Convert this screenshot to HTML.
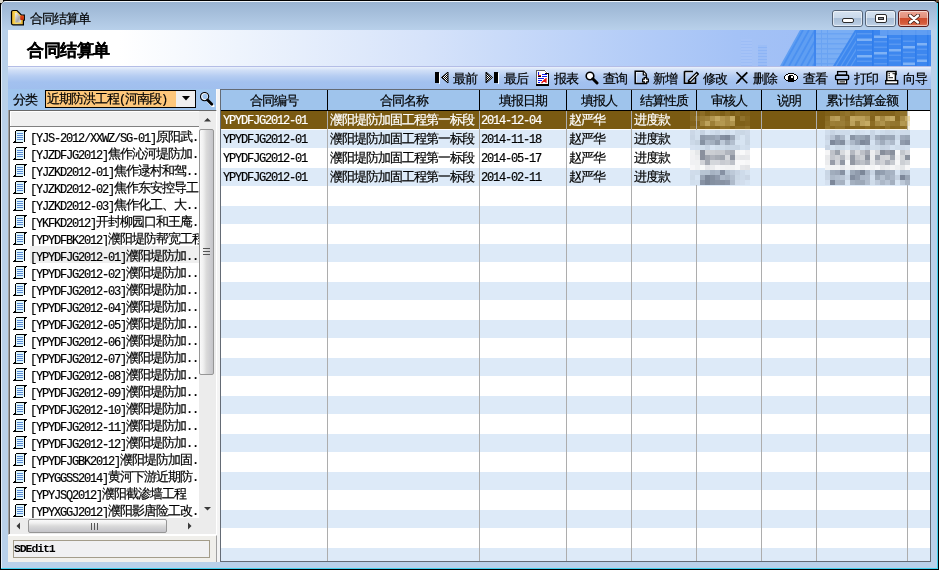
<!DOCTYPE html>
<html><head><meta charset="utf-8">
<style>
*{box-sizing:border-box;margin:0;padding:0}
html,body{width:939px;height:570px;overflow:hidden;background:#000}
body{position:relative;font-family:"Liberation Sans",sans-serif;font-size:12px;color:#000;line-height:12px}
.a{position:absolute}
.t{position:absolute;white-space:nowrap;line-height:12px;height:12px;font-size:13px;letter-spacing:-1px;-webkit-text-stroke:0.2px currentColor;will-change:transform}
.m{font-family:"Liberation Mono",monospace;font-size:12px;letter-spacing:-1.2px}
</style></head><body>

<div class="a" style="left:0;top:0;width:3px;height:2px;background:#d8d4c8"></div><div class="a" style="left:0;top:0;width:2px;height:3px;background:#d8d4c8"></div><div class="a" style="left:936px;top:0;width:3px;height:2px;background:#6a5038"></div>
<div class="a" style="left:1px;top:1px;width:937px;height:568px;background:#000;border-radius:6px 6px 0 0"></div><div class="a" style="left:937px;top:3px;width:1px;height:566px;background:#3fd0ee"></div><div class="a" style="left:1px;top:568px;width:937px;height:1px;background:#3fd0ee"></div>
<div class="a" style="left:1px;top:1px;width:936px;height:567px;background:#b9d1ea;border-radius:5px 4px 0 0;border-top:1px solid #eef4fa;border-left:1px solid #e3edf8"></div>
<div class="a" style="left:2px;top:2px;width:935px;height:28px;border-radius:4px 3px 0 0;background:linear-gradient(#9ab4d2,#b8d0ea)"></div>
<svg class="a" style="left:10px;top:9px" width="16" height="17" viewBox="0 0 16 17">
<defs><linearGradient id="gold" x1="0" x2="1"><stop offset="0" stop-color="#e8b020"/><stop offset="0.35" stop-color="#fbe070"/><stop offset="1" stop-color="#e0a828"/></linearGradient>
<linearGradient id="pap" x1="0" x2="1" y1="0" y2="1"><stop offset="0" stop-color="#f4f4f4"/><stop offset="0.6" stop-color="#a8a8a8"/><stop offset="1" stop-color="#e8e8e8"/></linearGradient>
<linearGradient id="red" x1="0" x2="0" y1="0" y2="1"><stop offset="0" stop-color="#f04818"/><stop offset="1" stop-color="#b82808"/></linearGradient></defs>
<path d="M1.5 3 Q1.5 1.5 3 1.5 H7 L11.5 6.2 H14.3 V11.2 H13.4 V15.8 H3 Q1.5 15.8 1.5 14.3 Z" fill="url(#gold)" stroke="#000" stroke-width="1.2"/>
<path d="M5.2 4 H6.8 L11 8.2 V13.6 H5.2 Z" fill="url(#pap)"/>
<rect x="10.2" y="6.6" width="3.6" height="4.4" rx="0.8" fill="url(#red)"/>
</svg>
<div class="t" style="left:30px;top:13px">合同结算单</div>
<div class="a" style="left:832px;top:10px;width:31px;height:17px;border:1px solid #56667a;border-radius:3px;background:linear-gradient(#d6e3f0 0%,#c9d9ea 45%,#a9bfd8 48%,#b4c8de 80%,#c4d6ea 100%)"><div class="a" style="left:0;top:0;right:0;bottom:0;border:1px solid rgba(255,255,255,0.55);border-radius:2px"></div><div class="a" style="left:9px;top:7px;width:12px;height:5px;background:#fff;border:1px solid #2a2a2a;border-radius:2px"></div></div>
<div class="a" style="left:865px;top:10px;width:31px;height:17px;border:1px solid #56667a;border-radius:3px;background:linear-gradient(#d6e3f0 0%,#c9d9ea 45%,#a9bfd8 48%,#b4c8de 80%,#c4d6ea 100%)"><div class="a" style="left:0;top:0;right:0;bottom:0;border:1px solid rgba(255,255,255,0.55);border-radius:2px"></div><div class="a" style="left:9px;top:3px;width:12px;height:9px;background:#fff;border:1px solid #2a2a2a;border-radius:2px"><div class="a" style="left:2px;top:2px;width:6px;height:3px;background:#8a9098;border:1px solid #2a2a2a"></div></div></div>
<div class="a" style="left:898px;top:10px;width:31px;height:17px;border:1px solid #5a1c1c;border-radius:3px;background:linear-gradient(#eda595 0%,#e2907c 45%,#cf4c2e 48%,#d45a3a 80%,#e07a5e 100%)"><div class="a" style="left:0;top:0;right:0;bottom:0;border:1px solid rgba(255,255,255,0.55);border-radius:2px"></div><svg class="a" style="left:9px;top:3px" width="12" height="10" viewBox="0 0 12 10"><path d="M2 1.5 L10 8.5 M10 1.5 L2 8.5" stroke="#3a1810" stroke-width="4" stroke-linecap="round"/><path d="M2 1.5 L10 8.5 M10 1.5 L2 8.5" stroke="#fff" stroke-width="2.4" stroke-linecap="round"/></svg></div>
<div class="a" style="left:8px;top:30px;width:923px;height:532px;background:#f0f0f0"></div>
<div class="a" style="left:8px;top:30px;width:923px;height:36px;background:linear-gradient(90deg,#ffffff 0%,#ffffff 12%,#eef4fd 25%,#d6e3fa 45%,#bcd2f8 62%,#a4c2f6 79%,#98b9f5 100%)"></div>
<svg class="a" style="left:730px;top:30px" width="201" height="36" viewBox="0 0 201 36"><rect x="11" y="9" width="11" height="27" fill="#a6c3f7"/><rect x="28" y="15" width="9" height="21" fill="#9bbdf6"/><rect x="11" y="11" width="11" height="1" fill="#9dbdf6"/><rect x="11" y="14" width="11" height="1" fill="#9dbdf6"/><rect x="11" y="17" width="11" height="1" fill="#9dbdf6"/><rect x="11" y="20" width="11" height="1" fill="#9dbdf6"/><rect x="11" y="23" width="11" height="1" fill="#9dbdf6"/><rect x="11" y="26" width="11" height="1" fill="#9dbdf6"/><rect x="11" y="29" width="11" height="1" fill="#9dbdf6"/><rect x="11" y="32" width="11" height="1" fill="#9dbdf6"/><rect x="11" y="35" width="11" height="1" fill="#9dbdf6"/><rect x="28" y="17" width="9" height="1" fill="#8db4f5"/><rect x="28" y="20" width="9" height="1" fill="#8db4f5"/><rect x="28" y="23" width="9" height="1" fill="#8db4f5"/><rect x="28" y="26" width="9" height="1" fill="#8db4f5"/><rect x="28" y="29" width="9" height="1" fill="#8db4f5"/><rect x="28" y="32" width="9" height="1" fill="#8db4f5"/><rect x="28" y="35" width="9" height="1" fill="#8db4f5"/><path d="M50 36 L70 0 L85 0 L85 36 Z" fill="#5f9ef2"/><path d="M53 36 L73 0" stroke="#4b90f0" stroke-width="1.8"/><path d="M59 36 L79 0" stroke="#4b90f0" stroke-width="1.8"/><path d="M65 36 L85 0" stroke="#4b90f0" stroke-width="1.8"/><path d="M71 36 L91 0" stroke="#4b90f0" stroke-width="1.8"/><path d="M77 36 L97 0" stroke="#4b90f0" stroke-width="1.8"/><path d="M83 36 L103 0" stroke="#4b90f0" stroke-width="1.8"/><rect x="84" y="0" width="2" height="36" fill="#3f86ee"/><rect x="86" y="0" width="40" height="36" fill="#7aaef4"/><rect x="86" y="3" width="40" height="1.5" fill="#6ba4f3"/><rect x="86" y="8" width="40" height="1.5" fill="#6ba4f3"/><rect x="86" y="13" width="40" height="1.5" fill="#6ba4f3"/><rect x="86" y="18" width="40" height="1.5" fill="#6ba4f3"/><rect x="86" y="23" width="40" height="1.5" fill="#6ba4f3"/><rect x="86" y="28" width="40" height="1.5" fill="#6ba4f3"/><rect x="86" y="33" width="40" height="1.5" fill="#6ba4f3"/><rect x="91" y="0" width="1" height="36" fill="#6aa3f2"/><rect x="97" y="0" width="1" height="36" fill="#6aa3f2"/><path d="M103 36 L125 0 L201 0 L201 36 Z" fill="#3e88ef"/><path d="M106 36 L128 0" stroke="#5c9cf2" stroke-width="1.2"/><path d="M111 36 L133 0" stroke="#5c9cf2" stroke-width="1.2"/><path d="M116 36 L138 0" stroke="#5c9cf2" stroke-width="1.2"/><path d="M121 36 L143 0" stroke="#5c9cf2" stroke-width="1.2"/><rect x="126" y="0" width="75" height="36" fill="#3d87ef"/><rect x="127" y="3.0" width="15" height="1.5" fill="#5898f1"/><rect x="127" y="8.5" width="15" height="2.5" fill="#7fb2f5"/><rect x="127" y="14.0" width="15" height="1.5" fill="#5898f1"/><rect x="127" y="19.5" width="15" height="1.5" fill="#5898f1"/><rect x="127" y="25.0" width="15" height="2.5" fill="#7fb2f5"/><rect x="127" y="30.5" width="15" height="1.5" fill="#5898f1"/><rect x="144" y="5.5" width="13" height="2.5" fill="#7fb2f5"/><rect x="144" y="11.0" width="13" height="1.5" fill="#5898f1"/><rect x="144" y="16.5" width="13" height="1.5" fill="#5898f1"/><rect x="144" y="22.0" width="13" height="2.5" fill="#7fb2f5"/><rect x="144" y="27.5" width="13" height="1.5" fill="#5898f1"/><rect x="144" y="33.0" width="13" height="1.5" fill="#5898f1"/><rect x="159" y="8.0" width="12" height="1.5" fill="#5898f1"/><rect x="159" y="13.5" width="12" height="1.5" fill="#5898f1"/><rect x="159" y="19.0" width="12" height="2.5" fill="#7fb2f5"/><rect x="159" y="24.5" width="12" height="1.5" fill="#5898f1"/><rect x="159" y="30.0" width="12" height="1.5" fill="#5898f1"/><rect x="173" y="10.5" width="12" height="1.5" fill="#5898f1"/><rect x="173" y="16.0" width="12" height="2.5" fill="#7fb2f5"/><rect x="173" y="21.5" width="12" height="1.5" fill="#5898f1"/><rect x="173" y="27.0" width="12" height="1.5" fill="#5898f1"/><rect x="173" y="32.5" width="12" height="2.5" fill="#7fb2f5"/><rect x="187" y="13.0" width="10" height="2.5" fill="#7fb2f5"/><rect x="187" y="18.5" width="10" height="1.5" fill="#5898f1"/><rect x="187" y="24.0" width="10" height="1.5" fill="#5898f1"/><rect x="187" y="29.5" width="10" height="2.5" fill="#7fb2f5"/><rect x="142" y="0" width="1.5" height="36" fill="#2f7dec"/><rect x="157" y="0" width="1.5" height="36" fill="#2f7dec"/><rect x="171" y="0" width="1.5" height="36" fill="#2f7dec"/><rect x="185" y="0" width="1.5" height="36" fill="#2f7dec"/><rect x="197" y="0" width="1.5" height="36" fill="#2f7dec"/><rect x="150" y="0" width="51" height="5" fill="#8dbaf6" opacity="0.45"/></svg>
<div class="t" style="left:27px;top:43px;font-size:17px;font-weight:bold;letter-spacing:-0.4px;line-height:16px;height:16px">合同结算单</div>
<div class="a" style="left:8px;top:66px;width:923px;height:1px;background:#b4bde6"></div>
<div class="a" style="left:8px;top:67px;width:923px;height:22px;background:linear-gradient(#eaf1fc 0,#d2e0f7 3px,#b6cdf2 9px,#a3c1ef 15px,#a0bfee 100%)"></div>
<svg class="a" style="left:435px;top:72px" width="15" height="12" viewBox="0 0 15 12"><defs><pattern id="chk" width="2" height="2" patternUnits="userSpaceOnUse"><rect width="2" height="2" fill="#fff"/><rect width="1" height="1" fill="#000"/><rect x="1" y="1" width="1" height="1" fill="#000"/></pattern></defs>
<rect x="0" y="0" width="4" height="11" fill="#000"/><rect x="4" y="1" width="1" height="11" fill="#fff"/>
<path d="M13 0 L13 11 L6.5 5.5 Z" fill="url(#chk)" stroke="#000" stroke-width="1"/></svg>
<div class="t" style="left:453px;top:73px">最前</div>
<svg class="a" style="left:485px;top:72px" width="15" height="12" viewBox="0 0 15 12">
<path d="M1 0 L1 11 L7.5 5.5 Z" fill="url(#chk)" stroke="#000" stroke-width="1"/>
<rect x="9" y="0" width="4" height="11" fill="#000"/><rect x="13" y="1" width="1" height="11" fill="#fff"/></svg>
<div class="t" style="left:504px;top:73px">最后</div>
<svg class="a" style="left:536px;top:70px" width="14" height="16" viewBox="0 0 14 16" shape-rendering="crispEdges">
<path d="M0 0 H9 L12 3 V15 H0 Z" fill="#fff"/>
<rect x="0" y="0" width="9" height="1" fill="#5a5a5a"/><rect x="0" y="0" width="1" height="15" fill="#5a5a5a"/>
<rect x="9" y="1" width="1" height="1" fill="#888"/><rect x="10" y="2" width="1" height="1" fill="#888"/>
<rect x="9" y="3" width="4" height="1" fill="#000"/><rect x="12" y="3" width="1" height="12" fill="#000"/><rect x="0" y="14" width="13" height="2" fill="#000"/>
<rect x="2" y="2" width="3" height="5" fill="#f4f4f4"/><rect x="2" y="2" width="1" height="3" fill="#1018e8"/><rect x="2" y="5" width="3" height="1" fill="#e81010"/><rect x="2" y="6" width="3" height="1" fill="#000"/>
<g fill="#1018e8"><rect x="6" y="4" width="5" height="1"/><rect x="6" y="6" width="5" height="1"/><rect x="2" y="8" width="6" height="1"/><rect x="2" y="10" width="4" height="1"/><rect x="2" y="12" width="2" height="1"/></g>
<path d="M5.5 13 L10 8.5 M10 8 V13 M7.5 11.5 H10" stroke="#e81010" stroke-width="1.2" fill="none" shape-rendering="auto"/>
</svg>
<div class="t" style="left:554px;top:73px">报表</div>
<svg class="a" style="left:585px;top:71px" width="14" height="14" viewBox="0 0 14 14">
<circle cx="5" cy="5" r="3.8" fill="#fff" stroke="#000" stroke-width="1.6"/>
<path d="M7.8 7.8 L12 12" stroke="#000" stroke-width="3" stroke-linecap="round"/></svg>
<div class="t" style="left:603px;top:73px">查询</div>
<svg class="a" style="left:634px;top:70px" width="16" height="15" viewBox="0 0 16 15">
<path d="M2 2 H9 L12 5 V13 H2 Z" fill="none" stroke="#fff" stroke-width="1"/>
<path d="M1.2 1.3 H9.5 L12.3 4.3 V13.5 H1.2 Z" fill="none" stroke="#000" stroke-width="1.5"/>
<path d="M9.3 1.5 V5 H12.5" fill="#fff" stroke="#000" stroke-width="1.2"/>
<path d="M11.5 7 V14 M8 10.5 H15" stroke="#000" stroke-width="3.8"/><path d="M11.5 8.2 V12.8 M9.2 10.5 H13.8" stroke="#fff" stroke-width="1.3"/>
</svg>
<div class="t" style="left:653px;top:73px">新增</div>
<svg class="a" style="left:683px;top:70px" width="17" height="15" viewBox="0 0 17 15">
<path d="M2.3 2.3 H9 M2.3 2.3 V12.5 H11.8 V8" fill="none" stroke="#fff" stroke-width="1"/>
<path d="M1.5 1.5 H10 M1.5 1.3 V13.3 H12.5 V7.5" fill="none" stroke="#000" stroke-width="1.6"/>
<path d="M5.5 10.5 L13.5 2.5 L15.2 4.2 L7.2 12.2 Z" fill="#fff" stroke="#000" stroke-width="1.2"/>
<path d="M4.5 13.2 L5.2 10.2 L7.5 12.5 Z" fill="#000"/>
<path d="M13.8 1.5 L16 3.8 L15 4.8 L12.8 2.6 Z" fill="#000"/>
</svg>
<div class="t" style="left:703px;top:73px">修改</div>
<svg class="a" style="left:735px;top:71px" width="14" height="14" viewBox="0 0 14 14">
<path d="M1.5 1.3 L12.3 12.3" stroke="#000" stroke-width="1.5"/>
<path d="M12.3 1.3 L3 10.5" stroke="#000" stroke-width="1.8"/>
<path d="M0.8 12.2 L3.2 9.2 L4.8 10.8 L1.8 13 Z" fill="#000"/>
<path d="M2 13.3 L5 11.5 M12.8 12.8" stroke="#fff" stroke-width="0.8" opacity="0.8"/>
</svg>
<div class="t" style="left:753px;top:73px">删除</div>
<svg class="a" style="left:784px;top:72px" width="14" height="11" viewBox="0 0 14 11" shape-rendering="crispEdges"><rect x="4" y="2" width="6" height="1" fill="#fff"/><rect x="2" y="3" width="10" height="1" fill="#fff"/><rect x="1" y="4" width="12" height="3" fill="#fff"/><rect x="2" y="7" width="10" height="1" fill="#fff"/><rect x="4" y="8" width="6" height="1" fill="#fff"/><rect x="4" y="1" width="6" height="1" fill="#000"/><rect x="2" y="2" width="2" height="1" fill="#000"/><rect x="10" y="2" width="2" height="1" fill="#000"/><rect x="1" y="3" width="1" height="1" fill="#000"/><rect x="12" y="3" width="1" height="1" fill="#000"/><rect x="0" y="4" width="1" height="3" fill="#000"/><rect x="13" y="4" width="1" height="3" fill="#000"/><rect x="1" y="7" width="1" height="1" fill="#000"/><rect x="12" y="7" width="1" height="1" fill="#000"/><rect x="2" y="8" width="2" height="1" fill="#000"/><rect x="10" y="8" width="2" height="1" fill="#000"/><rect x="4" y="9" width="6" height="1" fill="#000"/><rect x="5" y="3" width="4" height="1" fill="#000"/><rect x="4" y="4" width="6" height="5" fill="#000"/><rect x="5" y="9" width="4" height="1" fill="#000"/><rect x="7" y="4" width="2" height="2" fill="#fff"/></svg>
<div class="t" style="left:803px;top:73px">查看</div>
<svg class="a" style="left:834px;top:70px" width="16" height="15" viewBox="0 0 16 15">
<rect x="3.6" y="1.6" width="9" height="3.6" fill="none" stroke="#fff" stroke-width="0.8"/>
<rect x="3.6" y="10.4" width="9" height="3.4" fill="#fff"/>
<rect x="1.6" y="5.5" width="13" height="4" fill="none" stroke="#fff" stroke-width="0.8"/>
<rect x="3.6" y="1.6" width="9" height="3.6" fill="none" stroke="#000" stroke-width="1.3"/>
<rect x="1.6" y="5.2" width="13" height="4.4" rx="0.8" fill="none" stroke="#000" stroke-width="1.4"/>
<rect x="3.6" y="9.6" width="9" height="4.2" fill="none" stroke="#000" stroke-width="1.3"/>
<path d="M5.5 11.9 H11" stroke="#000" stroke-width="1"/>
</svg>
<div class="t" style="left:854px;top:73px">打印</div>
<svg class="a" style="left:884px;top:70px" width="15" height="15" viewBox="0 0 15 15">
<rect x="3" y="2" width="8" height="8" fill="#fff"/>
<path d="M2.8 1.6 H12 V4.6 H11.4 V10 M2.8 1.2 V10" fill="none" stroke="#000" stroke-width="1.5"/>
<path d="M4.5 3.7 H6 M8.5 3.7 H12.5 M4.5 5.7 H6 M4.5 7.7 H9" stroke="#000" stroke-width="0.9"/>
<rect x="1.7" y="10.6" width="12" height="3.3" fill="#fff" stroke="#000" stroke-width="1.3"/>
</svg>
<div class="t" style="left:903px;top:73px">向导</div>
<div class="a" style="left:8px;top:89px;width:208px;height:21px;background:#a0c5ee"></div>
<div class="t" style="left:13px;top:94px">分类</div>
<div class="a" style="left:45px;top:90px;width:151px;height:18px;border:1px solid #000;background:#fdc77b"></div>
<div class="t" style="left:47px;top:93px">近期防洪工程<span class="m">(</span>河南段<span class="m">)</span></div>
<div class="a" style="left:176px;top:91px;width:19px;height:16px;background:#efefef"></div>
<svg class="a" style="left:182px;top:96px" width="9" height="5" viewBox="0 0 9 5"><path d="M0 0 H8 L4 4.5 Z" fill="#000"/></svg>
<svg class="a" style="left:200px;top:92px" width="15" height="15" viewBox="0 0 15 15">
<path d="M8.5 9.5 L13 14" stroke="#fff" stroke-width="3" stroke-linecap="round"/>
<circle cx="5" cy="4.5" r="3.3" fill="none" stroke="#fff" stroke-width="1.2"/>
<circle cx="4.6" cy="4.6" r="4.1" fill="none" stroke="#000" stroke-width="1.1"/>
<path d="M7.6 8 L11.8 12.2" stroke="#000" stroke-width="2.8" stroke-linecap="round"/></svg>
<div class="a" style="left:216px;top:89px;width:4px;height:473px;background:#f4f4f4;border-left:1px solid #fafafa"></div>
<div class="a" style="left:8px;top:110px;width:209px;height:425px;border-top:1px solid #a0a0a0;border-left:1px solid #a0a0a0;border-right:1px solid #fff;border-bottom:1px solid #fff"></div>
<div class="a" style="left:9px;top:110px;width:207px;height:424px;background:#fff;border-top:1px solid #696969;border-left:1px solid #696969"></div>
<div class="a" style="left:10px;top:111px;width:189px;height:15px;background:#f0f0f0;border-top:1px solid #fff;border-left:1px solid #fff"></div>
<div class="a" style="left:10px;top:126px;width:189px;height:1px;background:#808080"></div>
<svg class="a" style="left:13px;top:130px" width="14" height="13" viewBox="0 0 14 13" shape-rendering="crispEdges">
<rect x="3" y="1" width="8" height="11" fill="#def6fd"/>
<rect x="3" y="0" width="11" height="1" fill="#000"/><rect x="11" y="1" width="1" height="11" fill="#000"/><rect x="12" y="1" width="1" height="1" fill="#000"/>
<rect x="2" y="1" width="1" height="11" fill="#000"/><rect x="0" y="12" width="10" height="1" fill="#000"/><rect x="1" y="11" width="1" height="1" fill="#000"/>
<rect x="4" y="3" width="6" height="1" fill="#5a8ad6"/><rect x="4" y="5" width="6" height="1" fill="#5a8ad6"/><rect x="4" y="7" width="6" height="1" fill="#5a8ad6"/><rect x="4" y="9" width="6" height="1" fill="#5a8ad6"/>
</svg>
<div class="t" style="left:30px;top:131px"><span class="m" style="position:relative;top:1px">[YJS-2012/XXWZ/SG-01]</span>原阳武<span class="m">.</span></div>
<svg class="a" style="left:13px;top:147px" width="14" height="13" viewBox="0 0 14 13" shape-rendering="crispEdges">
<rect x="3" y="1" width="8" height="11" fill="#def6fd"/>
<rect x="3" y="0" width="11" height="1" fill="#000"/><rect x="11" y="1" width="1" height="11" fill="#000"/><rect x="12" y="1" width="1" height="1" fill="#000"/>
<rect x="2" y="1" width="1" height="11" fill="#000"/><rect x="0" y="12" width="10" height="1" fill="#000"/><rect x="1" y="11" width="1" height="1" fill="#000"/>
<rect x="4" y="3" width="6" height="1" fill="#5a8ad6"/><rect x="4" y="5" width="6" height="1" fill="#5a8ad6"/><rect x="4" y="7" width="6" height="1" fill="#5a8ad6"/><rect x="4" y="9" width="6" height="1" fill="#5a8ad6"/>
</svg>
<div class="t" style="left:30px;top:148px"><span class="m" style="position:relative;top:1px">[YJZDFJG2012]</span>焦作沁河堤防加<span class="m">.</span></div>
<svg class="a" style="left:13px;top:164px" width="14" height="13" viewBox="0 0 14 13" shape-rendering="crispEdges">
<rect x="3" y="1" width="8" height="11" fill="#def6fd"/>
<rect x="3" y="0" width="11" height="1" fill="#000"/><rect x="11" y="1" width="1" height="11" fill="#000"/><rect x="12" y="1" width="1" height="1" fill="#000"/>
<rect x="2" y="1" width="1" height="11" fill="#000"/><rect x="0" y="12" width="10" height="1" fill="#000"/><rect x="1" y="11" width="1" height="1" fill="#000"/>
<rect x="4" y="3" width="6" height="1" fill="#5a8ad6"/><rect x="4" y="5" width="6" height="1" fill="#5a8ad6"/><rect x="4" y="7" width="6" height="1" fill="#5a8ad6"/><rect x="4" y="9" width="6" height="1" fill="#5a8ad6"/>
</svg>
<div class="t" style="left:30px;top:165px"><span class="m" style="position:relative;top:1px">[YJZKD2012-01]</span>焦作逯村和驾<span class="m">..</span></div>
<svg class="a" style="left:13px;top:181px" width="14" height="13" viewBox="0 0 14 13" shape-rendering="crispEdges">
<rect x="3" y="1" width="8" height="11" fill="#def6fd"/>
<rect x="3" y="0" width="11" height="1" fill="#000"/><rect x="11" y="1" width="1" height="11" fill="#000"/><rect x="12" y="1" width="1" height="1" fill="#000"/>
<rect x="2" y="1" width="1" height="11" fill="#000"/><rect x="0" y="12" width="10" height="1" fill="#000"/><rect x="1" y="11" width="1" height="1" fill="#000"/>
<rect x="4" y="3" width="6" height="1" fill="#5a8ad6"/><rect x="4" y="5" width="6" height="1" fill="#5a8ad6"/><rect x="4" y="7" width="6" height="1" fill="#5a8ad6"/><rect x="4" y="9" width="6" height="1" fill="#5a8ad6"/>
</svg>
<div class="t" style="left:30px;top:182px"><span class="m" style="position:relative;top:1px">[YJZKD2012-02]</span>焦作东安控导工<span class="m"></span></div>
<svg class="a" style="left:13px;top:198px" width="14" height="13" viewBox="0 0 14 13" shape-rendering="crispEdges">
<rect x="3" y="1" width="8" height="11" fill="#def6fd"/>
<rect x="3" y="0" width="11" height="1" fill="#000"/><rect x="11" y="1" width="1" height="11" fill="#000"/><rect x="12" y="1" width="1" height="1" fill="#000"/>
<rect x="2" y="1" width="1" height="11" fill="#000"/><rect x="0" y="12" width="10" height="1" fill="#000"/><rect x="1" y="11" width="1" height="1" fill="#000"/>
<rect x="4" y="3" width="6" height="1" fill="#5a8ad6"/><rect x="4" y="5" width="6" height="1" fill="#5a8ad6"/><rect x="4" y="7" width="6" height="1" fill="#5a8ad6"/><rect x="4" y="9" width="6" height="1" fill="#5a8ad6"/>
</svg>
<div class="t" style="left:30px;top:199px"><span class="m" style="position:relative;top:1px">[YJZKD2012-03]</span>焦作化工、大<span class="m">..</span></div>
<svg class="a" style="left:13px;top:215px" width="14" height="13" viewBox="0 0 14 13" shape-rendering="crispEdges">
<rect x="3" y="1" width="8" height="11" fill="#def6fd"/>
<rect x="3" y="0" width="11" height="1" fill="#000"/><rect x="11" y="1" width="1" height="11" fill="#000"/><rect x="12" y="1" width="1" height="1" fill="#000"/>
<rect x="2" y="1" width="1" height="11" fill="#000"/><rect x="0" y="12" width="10" height="1" fill="#000"/><rect x="1" y="11" width="1" height="1" fill="#000"/>
<rect x="4" y="3" width="6" height="1" fill="#5a8ad6"/><rect x="4" y="5" width="6" height="1" fill="#5a8ad6"/><rect x="4" y="7" width="6" height="1" fill="#5a8ad6"/><rect x="4" y="9" width="6" height="1" fill="#5a8ad6"/>
</svg>
<div class="t" style="left:30px;top:216px"><span class="m" style="position:relative;top:1px">[YKFKD2012]</span>开封柳园口和王庵<span class="m">.</span></div>
<svg class="a" style="left:13px;top:232px" width="14" height="13" viewBox="0 0 14 13" shape-rendering="crispEdges">
<rect x="3" y="1" width="8" height="11" fill="#def6fd"/>
<rect x="3" y="0" width="11" height="1" fill="#000"/><rect x="11" y="1" width="1" height="11" fill="#000"/><rect x="12" y="1" width="1" height="1" fill="#000"/>
<rect x="2" y="1" width="1" height="11" fill="#000"/><rect x="0" y="12" width="10" height="1" fill="#000"/><rect x="1" y="11" width="1" height="1" fill="#000"/>
<rect x="4" y="3" width="6" height="1" fill="#5a8ad6"/><rect x="4" y="5" width="6" height="1" fill="#5a8ad6"/><rect x="4" y="7" width="6" height="1" fill="#5a8ad6"/><rect x="4" y="9" width="6" height="1" fill="#5a8ad6"/>
</svg>
<div class="t" style="left:30px;top:233px"><span class="m" style="position:relative;top:1px">[YPYDFBK2012]</span>濮阳堤防帮宽工程<span class="m"></span></div>
<div class="a" style="left:30px;top:246px;width:169px;height:17px;background:#efefef"></div>
<svg class="a" style="left:13px;top:249px" width="14" height="13" viewBox="0 0 14 13" shape-rendering="crispEdges">
<rect x="3" y="1" width="8" height="11" fill="#def6fd"/>
<rect x="3" y="0" width="11" height="1" fill="#000"/><rect x="11" y="1" width="1" height="11" fill="#000"/><rect x="12" y="1" width="1" height="1" fill="#000"/>
<rect x="2" y="1" width="1" height="11" fill="#000"/><rect x="0" y="12" width="10" height="1" fill="#000"/><rect x="1" y="11" width="1" height="1" fill="#000"/>
<rect x="4" y="3" width="6" height="1" fill="#5a8ad6"/><rect x="4" y="5" width="6" height="1" fill="#5a8ad6"/><rect x="4" y="7" width="6" height="1" fill="#5a8ad6"/><rect x="4" y="9" width="6" height="1" fill="#5a8ad6"/>
</svg>
<div class="t" style="left:30px;top:250px"><span class="m" style="position:relative;top:1px">[YPYDFJG2012-01]</span>濮阳堤防加<span class="m">..</span></div>
<svg class="a" style="left:13px;top:266px" width="14" height="13" viewBox="0 0 14 13" shape-rendering="crispEdges">
<rect x="3" y="1" width="8" height="11" fill="#def6fd"/>
<rect x="3" y="0" width="11" height="1" fill="#000"/><rect x="11" y="1" width="1" height="11" fill="#000"/><rect x="12" y="1" width="1" height="1" fill="#000"/>
<rect x="2" y="1" width="1" height="11" fill="#000"/><rect x="0" y="12" width="10" height="1" fill="#000"/><rect x="1" y="11" width="1" height="1" fill="#000"/>
<rect x="4" y="3" width="6" height="1" fill="#5a8ad6"/><rect x="4" y="5" width="6" height="1" fill="#5a8ad6"/><rect x="4" y="7" width="6" height="1" fill="#5a8ad6"/><rect x="4" y="9" width="6" height="1" fill="#5a8ad6"/>
</svg>
<div class="t" style="left:30px;top:267px"><span class="m" style="position:relative;top:1px">[YPYDFJG2012-02]</span>濮阳堤防加<span class="m">..</span></div>
<svg class="a" style="left:13px;top:283px" width="14" height="13" viewBox="0 0 14 13" shape-rendering="crispEdges">
<rect x="3" y="1" width="8" height="11" fill="#def6fd"/>
<rect x="3" y="0" width="11" height="1" fill="#000"/><rect x="11" y="1" width="1" height="11" fill="#000"/><rect x="12" y="1" width="1" height="1" fill="#000"/>
<rect x="2" y="1" width="1" height="11" fill="#000"/><rect x="0" y="12" width="10" height="1" fill="#000"/><rect x="1" y="11" width="1" height="1" fill="#000"/>
<rect x="4" y="3" width="6" height="1" fill="#5a8ad6"/><rect x="4" y="5" width="6" height="1" fill="#5a8ad6"/><rect x="4" y="7" width="6" height="1" fill="#5a8ad6"/><rect x="4" y="9" width="6" height="1" fill="#5a8ad6"/>
</svg>
<div class="t" style="left:30px;top:284px"><span class="m" style="position:relative;top:1px">[YPYDFJG2012-03]</span>濮阳堤防加<span class="m">..</span></div>
<svg class="a" style="left:13px;top:300px" width="14" height="13" viewBox="0 0 14 13" shape-rendering="crispEdges">
<rect x="3" y="1" width="8" height="11" fill="#def6fd"/>
<rect x="3" y="0" width="11" height="1" fill="#000"/><rect x="11" y="1" width="1" height="11" fill="#000"/><rect x="12" y="1" width="1" height="1" fill="#000"/>
<rect x="2" y="1" width="1" height="11" fill="#000"/><rect x="0" y="12" width="10" height="1" fill="#000"/><rect x="1" y="11" width="1" height="1" fill="#000"/>
<rect x="4" y="3" width="6" height="1" fill="#5a8ad6"/><rect x="4" y="5" width="6" height="1" fill="#5a8ad6"/><rect x="4" y="7" width="6" height="1" fill="#5a8ad6"/><rect x="4" y="9" width="6" height="1" fill="#5a8ad6"/>
</svg>
<div class="t" style="left:30px;top:301px"><span class="m" style="position:relative;top:1px">[YPYDFJG2012-04]</span>濮阳堤防加<span class="m">..</span></div>
<svg class="a" style="left:13px;top:317px" width="14" height="13" viewBox="0 0 14 13" shape-rendering="crispEdges">
<rect x="3" y="1" width="8" height="11" fill="#def6fd"/>
<rect x="3" y="0" width="11" height="1" fill="#000"/><rect x="11" y="1" width="1" height="11" fill="#000"/><rect x="12" y="1" width="1" height="1" fill="#000"/>
<rect x="2" y="1" width="1" height="11" fill="#000"/><rect x="0" y="12" width="10" height="1" fill="#000"/><rect x="1" y="11" width="1" height="1" fill="#000"/>
<rect x="4" y="3" width="6" height="1" fill="#5a8ad6"/><rect x="4" y="5" width="6" height="1" fill="#5a8ad6"/><rect x="4" y="7" width="6" height="1" fill="#5a8ad6"/><rect x="4" y="9" width="6" height="1" fill="#5a8ad6"/>
</svg>
<div class="t" style="left:30px;top:318px"><span class="m" style="position:relative;top:1px">[YPYDFJG2012-05]</span>濮阳堤防加<span class="m">..</span></div>
<svg class="a" style="left:13px;top:334px" width="14" height="13" viewBox="0 0 14 13" shape-rendering="crispEdges">
<rect x="3" y="1" width="8" height="11" fill="#def6fd"/>
<rect x="3" y="0" width="11" height="1" fill="#000"/><rect x="11" y="1" width="1" height="11" fill="#000"/><rect x="12" y="1" width="1" height="1" fill="#000"/>
<rect x="2" y="1" width="1" height="11" fill="#000"/><rect x="0" y="12" width="10" height="1" fill="#000"/><rect x="1" y="11" width="1" height="1" fill="#000"/>
<rect x="4" y="3" width="6" height="1" fill="#5a8ad6"/><rect x="4" y="5" width="6" height="1" fill="#5a8ad6"/><rect x="4" y="7" width="6" height="1" fill="#5a8ad6"/><rect x="4" y="9" width="6" height="1" fill="#5a8ad6"/>
</svg>
<div class="t" style="left:30px;top:335px"><span class="m" style="position:relative;top:1px">[YPYDFJG2012-06]</span>濮阳堤防加<span class="m">..</span></div>
<svg class="a" style="left:13px;top:351px" width="14" height="13" viewBox="0 0 14 13" shape-rendering="crispEdges">
<rect x="3" y="1" width="8" height="11" fill="#def6fd"/>
<rect x="3" y="0" width="11" height="1" fill="#000"/><rect x="11" y="1" width="1" height="11" fill="#000"/><rect x="12" y="1" width="1" height="1" fill="#000"/>
<rect x="2" y="1" width="1" height="11" fill="#000"/><rect x="0" y="12" width="10" height="1" fill="#000"/><rect x="1" y="11" width="1" height="1" fill="#000"/>
<rect x="4" y="3" width="6" height="1" fill="#5a8ad6"/><rect x="4" y="5" width="6" height="1" fill="#5a8ad6"/><rect x="4" y="7" width="6" height="1" fill="#5a8ad6"/><rect x="4" y="9" width="6" height="1" fill="#5a8ad6"/>
</svg>
<div class="t" style="left:30px;top:352px"><span class="m" style="position:relative;top:1px">[YPYDFJG2012-07]</span>濮阳堤防加<span class="m">..</span></div>
<svg class="a" style="left:13px;top:368px" width="14" height="13" viewBox="0 0 14 13" shape-rendering="crispEdges">
<rect x="3" y="1" width="8" height="11" fill="#def6fd"/>
<rect x="3" y="0" width="11" height="1" fill="#000"/><rect x="11" y="1" width="1" height="11" fill="#000"/><rect x="12" y="1" width="1" height="1" fill="#000"/>
<rect x="2" y="1" width="1" height="11" fill="#000"/><rect x="0" y="12" width="10" height="1" fill="#000"/><rect x="1" y="11" width="1" height="1" fill="#000"/>
<rect x="4" y="3" width="6" height="1" fill="#5a8ad6"/><rect x="4" y="5" width="6" height="1" fill="#5a8ad6"/><rect x="4" y="7" width="6" height="1" fill="#5a8ad6"/><rect x="4" y="9" width="6" height="1" fill="#5a8ad6"/>
</svg>
<div class="t" style="left:30px;top:369px"><span class="m" style="position:relative;top:1px">[YPYDFJG2012-08]</span>濮阳堤防加<span class="m">..</span></div>
<svg class="a" style="left:13px;top:385px" width="14" height="13" viewBox="0 0 14 13" shape-rendering="crispEdges">
<rect x="3" y="1" width="8" height="11" fill="#def6fd"/>
<rect x="3" y="0" width="11" height="1" fill="#000"/><rect x="11" y="1" width="1" height="11" fill="#000"/><rect x="12" y="1" width="1" height="1" fill="#000"/>
<rect x="2" y="1" width="1" height="11" fill="#000"/><rect x="0" y="12" width="10" height="1" fill="#000"/><rect x="1" y="11" width="1" height="1" fill="#000"/>
<rect x="4" y="3" width="6" height="1" fill="#5a8ad6"/><rect x="4" y="5" width="6" height="1" fill="#5a8ad6"/><rect x="4" y="7" width="6" height="1" fill="#5a8ad6"/><rect x="4" y="9" width="6" height="1" fill="#5a8ad6"/>
</svg>
<div class="t" style="left:30px;top:386px"><span class="m" style="position:relative;top:1px">[YPYDFJG2012-09]</span>濮阳堤防加<span class="m">..</span></div>
<svg class="a" style="left:13px;top:402px" width="14" height="13" viewBox="0 0 14 13" shape-rendering="crispEdges">
<rect x="3" y="1" width="8" height="11" fill="#def6fd"/>
<rect x="3" y="0" width="11" height="1" fill="#000"/><rect x="11" y="1" width="1" height="11" fill="#000"/><rect x="12" y="1" width="1" height="1" fill="#000"/>
<rect x="2" y="1" width="1" height="11" fill="#000"/><rect x="0" y="12" width="10" height="1" fill="#000"/><rect x="1" y="11" width="1" height="1" fill="#000"/>
<rect x="4" y="3" width="6" height="1" fill="#5a8ad6"/><rect x="4" y="5" width="6" height="1" fill="#5a8ad6"/><rect x="4" y="7" width="6" height="1" fill="#5a8ad6"/><rect x="4" y="9" width="6" height="1" fill="#5a8ad6"/>
</svg>
<div class="t" style="left:30px;top:403px"><span class="m" style="position:relative;top:1px">[YPYDFJG2012-10]</span>濮阳堤防加<span class="m">..</span></div>
<svg class="a" style="left:13px;top:419px" width="14" height="13" viewBox="0 0 14 13" shape-rendering="crispEdges">
<rect x="3" y="1" width="8" height="11" fill="#def6fd"/>
<rect x="3" y="0" width="11" height="1" fill="#000"/><rect x="11" y="1" width="1" height="11" fill="#000"/><rect x="12" y="1" width="1" height="1" fill="#000"/>
<rect x="2" y="1" width="1" height="11" fill="#000"/><rect x="0" y="12" width="10" height="1" fill="#000"/><rect x="1" y="11" width="1" height="1" fill="#000"/>
<rect x="4" y="3" width="6" height="1" fill="#5a8ad6"/><rect x="4" y="5" width="6" height="1" fill="#5a8ad6"/><rect x="4" y="7" width="6" height="1" fill="#5a8ad6"/><rect x="4" y="9" width="6" height="1" fill="#5a8ad6"/>
</svg>
<div class="t" style="left:30px;top:420px"><span class="m" style="position:relative;top:1px">[YPYDFJG2012-11]</span>濮阳堤防加<span class="m">..</span></div>
<svg class="a" style="left:13px;top:436px" width="14" height="13" viewBox="0 0 14 13" shape-rendering="crispEdges">
<rect x="3" y="1" width="8" height="11" fill="#def6fd"/>
<rect x="3" y="0" width="11" height="1" fill="#000"/><rect x="11" y="1" width="1" height="11" fill="#000"/><rect x="12" y="1" width="1" height="1" fill="#000"/>
<rect x="2" y="1" width="1" height="11" fill="#000"/><rect x="0" y="12" width="10" height="1" fill="#000"/><rect x="1" y="11" width="1" height="1" fill="#000"/>
<rect x="4" y="3" width="6" height="1" fill="#5a8ad6"/><rect x="4" y="5" width="6" height="1" fill="#5a8ad6"/><rect x="4" y="7" width="6" height="1" fill="#5a8ad6"/><rect x="4" y="9" width="6" height="1" fill="#5a8ad6"/>
</svg>
<div class="t" style="left:30px;top:437px"><span class="m" style="position:relative;top:1px">[YPYDFJG2012-12]</span>濮阳堤防加<span class="m">..</span></div>
<svg class="a" style="left:13px;top:453px" width="14" height="13" viewBox="0 0 14 13" shape-rendering="crispEdges">
<rect x="3" y="1" width="8" height="11" fill="#def6fd"/>
<rect x="3" y="0" width="11" height="1" fill="#000"/><rect x="11" y="1" width="1" height="11" fill="#000"/><rect x="12" y="1" width="1" height="1" fill="#000"/>
<rect x="2" y="1" width="1" height="11" fill="#000"/><rect x="0" y="12" width="10" height="1" fill="#000"/><rect x="1" y="11" width="1" height="1" fill="#000"/>
<rect x="4" y="3" width="6" height="1" fill="#5a8ad6"/><rect x="4" y="5" width="6" height="1" fill="#5a8ad6"/><rect x="4" y="7" width="6" height="1" fill="#5a8ad6"/><rect x="4" y="9" width="6" height="1" fill="#5a8ad6"/>
</svg>
<div class="t" style="left:30px;top:454px"><span class="m" style="position:relative;top:1px">[YPYDFJGBK2012]</span>濮阳堤防加固<span class="m">.</span></div>
<svg class="a" style="left:13px;top:470px" width="14" height="13" viewBox="0 0 14 13" shape-rendering="crispEdges">
<rect x="3" y="1" width="8" height="11" fill="#def6fd"/>
<rect x="3" y="0" width="11" height="1" fill="#000"/><rect x="11" y="1" width="1" height="11" fill="#000"/><rect x="12" y="1" width="1" height="1" fill="#000"/>
<rect x="2" y="1" width="1" height="11" fill="#000"/><rect x="0" y="12" width="10" height="1" fill="#000"/><rect x="1" y="11" width="1" height="1" fill="#000"/>
<rect x="4" y="3" width="6" height="1" fill="#5a8ad6"/><rect x="4" y="5" width="6" height="1" fill="#5a8ad6"/><rect x="4" y="7" width="6" height="1" fill="#5a8ad6"/><rect x="4" y="9" width="6" height="1" fill="#5a8ad6"/>
</svg>
<div class="t" style="left:30px;top:471px"><span class="m" style="position:relative;top:1px">[YPYGGSS2014]</span>黄河下游近期防<span class="m">.</span></div>
<svg class="a" style="left:13px;top:487px" width="14" height="13" viewBox="0 0 14 13" shape-rendering="crispEdges">
<rect x="3" y="1" width="8" height="11" fill="#def6fd"/>
<rect x="3" y="0" width="11" height="1" fill="#000"/><rect x="11" y="1" width="1" height="11" fill="#000"/><rect x="12" y="1" width="1" height="1" fill="#000"/>
<rect x="2" y="1" width="1" height="11" fill="#000"/><rect x="0" y="12" width="10" height="1" fill="#000"/><rect x="1" y="11" width="1" height="1" fill="#000"/>
<rect x="4" y="3" width="6" height="1" fill="#5a8ad6"/><rect x="4" y="5" width="6" height="1" fill="#5a8ad6"/><rect x="4" y="7" width="6" height="1" fill="#5a8ad6"/><rect x="4" y="9" width="6" height="1" fill="#5a8ad6"/>
</svg>
<div class="t" style="left:30px;top:488px"><span class="m" style="position:relative;top:1px">[YPYJSQ2012]</span>濮阳截渗墙工程<span class="m"></span></div>
<svg class="a" style="left:13px;top:504px" width="14" height="13" viewBox="0 0 14 13" shape-rendering="crispEdges">
<rect x="3" y="1" width="8" height="11" fill="#def6fd"/>
<rect x="3" y="0" width="11" height="1" fill="#000"/><rect x="11" y="1" width="1" height="11" fill="#000"/><rect x="12" y="1" width="1" height="1" fill="#000"/>
<rect x="2" y="1" width="1" height="11" fill="#000"/><rect x="0" y="12" width="10" height="1" fill="#000"/><rect x="1" y="11" width="1" height="1" fill="#000"/>
<rect x="4" y="3" width="6" height="1" fill="#5a8ad6"/><rect x="4" y="5" width="6" height="1" fill="#5a8ad6"/><rect x="4" y="7" width="6" height="1" fill="#5a8ad6"/><rect x="4" y="9" width="6" height="1" fill="#5a8ad6"/>
</svg>
<div class="t" style="left:30px;top:505px"><span class="m" style="position:relative;top:1px">[YPYXGGJ2012]</span>濮阳影唐险工改<span class="m">.</span></div>
<div class="a" style="left:199px;top:111px;width:17px;height:407px;background:#ececec"></div>
<svg class="a" style="left:203px;top:117px" width="9" height="6" viewBox="0 0 9 6"><path d="M1 4.5 L4.5 1 L8 4.5 Z" fill="#3a3a3a"/></svg>
<svg class="a" style="left:203px;top:506px" width="9" height="6" viewBox="0 0 9 6"><path d="M1 1 L4.5 4.5 L8 1 Z" fill="#3a3a3a"/></svg>
<div class="a" style="left:199px;top:129px;width:15px;height:246px;border:1px solid #969696;border-radius:2px;background:linear-gradient(90deg,#fafafa,#f0f0f0 25%,#dadada 50%,#cacace 85%,#c4c4c8)"></div>
<div class="a" style="left:203px;top:248px;width:7px;height:7px;border-top:1px solid #555;border-bottom:1px solid #555"><div class="a" style="left:0;top:2px;width:7px;height:1px;background:#555"></div></div>
<div class="a" style="left:10px;top:518px;width:206px;height:16px;background:#ececec"></div>
<svg class="a" style="left:15px;top:521px" width="6" height="9" viewBox="0 0 6 9"><path d="M5 1.5 L1.5 5 L5 8.5 Z" fill="#3a3a3a"/></svg>
<svg class="a" style="left:187px;top:521px" width="6" height="9" viewBox="0 0 6 9"><path d="M1 1.5 L4.5 5 L1 8.5 Z" fill="#3a3a3a"/></svg>
<div class="a" style="left:28px;top:519px;width:139px;height:14px;border:1px solid #969696;border-radius:2px;background:linear-gradient(#fafafa,#f0f0f0 25%,#dadada 50%,#cacace 85%,#c4c4c8)"></div>
<div class="a" style="left:91px;top:523px;width:7px;height:7px;border-left:1px solid #555;border-right:1px solid #555"><div class="a" style="left:2px;top:0;width:1px;height:7px;background:#555"></div></div>
<div class="a" style="left:8px;top:535px;width:209px;height:27px;background:#f0efeb;border-top:1px solid #fff;border-right:1px solid #a0a0a0"></div>
<div class="a" style="left:13px;top:540px;width:197px;height:18px;border:1px solid #a39c8a;background:#f0f0f2"></div>
<div class="t m" style="left:14px;top:543px;font-weight:bold;font-size:11.5px;letter-spacing:-1.1px;-webkit-text-stroke:0">SDEdit1</div>
<div class="a" style="left:220px;top:89px;width:711px;height:473px;background:#fff;border:1px solid #646b75"></div>
<div class="a" style="left:221px;top:130px;width:709px;height:18px;background:#ddeaf8"></div>
<div class="a" style="left:221px;top:168px;width:709px;height:18px;background:#ddeaf8"></div>
<div class="a" style="left:221px;top:206px;width:709px;height:18px;background:#ddeaf8"></div>
<div class="a" style="left:221px;top:244px;width:709px;height:18px;background:#ddeaf8"></div>
<div class="a" style="left:221px;top:282px;width:709px;height:18px;background:#ddeaf8"></div>
<div class="a" style="left:221px;top:320px;width:709px;height:18px;background:#ddeaf8"></div>
<div class="a" style="left:221px;top:358px;width:709px;height:18px;background:#ddeaf8"></div>
<div class="a" style="left:221px;top:396px;width:709px;height:18px;background:#ddeaf8"></div>
<div class="a" style="left:221px;top:434px;width:709px;height:18px;background:#ddeaf8"></div>
<div class="a" style="left:221px;top:472px;width:709px;height:18px;background:#ddeaf8"></div>
<div class="a" style="left:221px;top:510px;width:709px;height:18px;background:#ddeaf8"></div>
<div class="a" style="left:221px;top:548px;width:709px;height:13px;background:#ddeaf8"></div>
<div class="a" style="left:221px;top:90px;width:709px;height:20px;background:#9fc4ec"></div>
<div class="a" style="left:221px;top:110px;width:709px;height:1px;background:#000"></div>
<div class="a" style="left:221px;top:111px;width:686px;height:18px;background:#7a5a12"></div>
<div class="a" style="left:327px;top:90px;width:1px;height:20px;background:#000"></div>
<div class="a" style="left:327px;top:111px;width:1px;height:450px;background:#adadad"></div>
<div class="a" style="left:479px;top:90px;width:1px;height:20px;background:#000"></div>
<div class="a" style="left:479px;top:111px;width:1px;height:450px;background:#adadad"></div>
<div class="a" style="left:566px;top:90px;width:1px;height:20px;background:#000"></div>
<div class="a" style="left:566px;top:111px;width:1px;height:450px;background:#adadad"></div>
<div class="a" style="left:631px;top:90px;width:1px;height:20px;background:#000"></div>
<div class="a" style="left:631px;top:111px;width:1px;height:450px;background:#adadad"></div>
<div class="a" style="left:696px;top:90px;width:1px;height:20px;background:#000"></div>
<div class="a" style="left:696px;top:111px;width:1px;height:450px;background:#adadad"></div>
<div class="a" style="left:761px;top:90px;width:1px;height:20px;background:#000"></div>
<div class="a" style="left:761px;top:111px;width:1px;height:450px;background:#adadad"></div>
<div class="a" style="left:816px;top:90px;width:1px;height:20px;background:#000"></div>
<div class="a" style="left:816px;top:111px;width:1px;height:450px;background:#adadad"></div>
<div class="a" style="left:907px;top:90px;width:1px;height:20px;background:#000"></div>
<div class="a" style="left:907px;top:111px;width:1px;height:450px;background:#adadad"></div>
<div class="t" style="left:250px;top:95px">合同编号</div>
<div class="t" style="left:380px;top:95px">合同名称</div>
<div class="t" style="left:499px;top:95px">填报日期</div>
<div class="t" style="left:581px;top:95px">填报人</div>
<div class="t" style="left:640px;top:95px">结算性质</div>
<div class="t" style="left:711px;top:95px">审核人</div>
<div class="t" style="left:777px;top:95px">说明</div>
<div class="t" style="left:826px;top:95px">累计结算金额</div>
<div class="t m" style="left:223px;top:115px;color:#fff">YPYDFJG2012-01</div>
<div class="t" style="left:330px;top:114px;color:#fff">濮阳堤防加固工程第一标段</div>
<div class="t m" style="left:481px;top:115px;color:#fff">2014-12-04</div>
<div class="t" style="left:569px;top:114px;color:#fff">赵严华</div>
<div class="t" style="left:634px;top:114px;color:#fff">进度款</div>
<div class="t m" style="left:223px;top:134px;color:#000">YPYDFJG2012-01</div>
<div class="t" style="left:330px;top:133px;color:#000">濮阳堤防加固工程第一标段</div>
<div class="t m" style="left:481px;top:134px;color:#000">2014-11-18</div>
<div class="t" style="left:569px;top:133px;color:#000">赵严华</div>
<div class="t" style="left:634px;top:133px;color:#000">进度款</div>
<div class="t m" style="left:223px;top:153px;color:#000">YPYDFJG2012-01</div>
<div class="t" style="left:330px;top:152px;color:#000">濮阳堤防加固工程第一标段</div>
<div class="t m" style="left:481px;top:153px;color:#000">2014-05-17</div>
<div class="t" style="left:569px;top:152px;color:#000">赵严华</div>
<div class="t" style="left:634px;top:152px;color:#000">进度款</div>
<div class="t m" style="left:223px;top:172px;color:#000">YPYDFJG2012-01</div>
<div class="t" style="left:330px;top:171px;color:#000">濮阳堤防加固工程第一标段</div>
<div class="t m" style="left:481px;top:172px;color:#000">2014-02-11</div>
<div class="t" style="left:569px;top:171px;color:#000">赵严华</div>
<div class="t" style="left:634px;top:171px;color:#000">进度款</div>
<div class="a" style="left:690px;top:111px;width:5px;height:5px;background:rgba(225,200,130,0.11)"></div>
<div class="a" style="left:695px;top:111px;width:5px;height:5px;background:rgba(225,200,130,0.08)"></div>
<div class="a" style="left:700px;top:111px;width:5px;height:5px;background:rgba(225,200,130,0.18)"></div>
<div class="a" style="left:705px;top:111px;width:5px;height:5px;background:rgba(225,200,130,0.06)"></div>
<div class="a" style="left:710px;top:111px;width:5px;height:5px;background:rgba(225,200,130,0.16)"></div>
<div class="a" style="left:715px;top:111px;width:5px;height:5px;background:rgba(225,200,130,0.12)"></div>
<div class="a" style="left:720px;top:111px;width:5px;height:5px;background:rgba(225,200,130,0.06)"></div>
<div class="a" style="left:725px;top:111px;width:5px;height:5px;background:rgba(225,200,130,0.15)"></div>
<div class="a" style="left:730px;top:111px;width:5px;height:5px;background:rgba(225,200,130,0.06)"></div>
<div class="a" style="left:735px;top:111px;width:5px;height:5px;background:rgba(225,200,130,0.14)"></div>
<div class="a" style="left:740px;top:111px;width:5px;height:5px;background:rgba(225,200,130,0.06)"></div>
<div class="a" style="left:745px;top:111px;width:5px;height:5px;background:rgba(225,200,130,0.07)"></div>
<div class="a" style="left:690px;top:116px;width:5px;height:5px;background:rgba(225,200,130,0.13)"></div>
<div class="a" style="left:695px;top:116px;width:5px;height:5px;background:rgba(225,200,130,0.22)"></div>
<div class="a" style="left:700px;top:116px;width:5px;height:5px;background:rgba(225,200,130,0.31)"></div>
<div class="a" style="left:705px;top:116px;width:5px;height:5px;background:rgba(225,200,130,0.36)"></div>
<div class="a" style="left:710px;top:116px;width:5px;height:5px;background:rgba(225,200,130,0.56)"></div>
<div class="a" style="left:715px;top:116px;width:5px;height:5px;background:rgba(225,200,130,0.72)"></div>
<div class="a" style="left:720px;top:116px;width:5px;height:5px;background:rgba(225,200,130,0.54)"></div>
<div class="a" style="left:725px;top:116px;width:5px;height:5px;background:rgba(225,200,130,0.45)"></div>
<div class="a" style="left:730px;top:116px;width:5px;height:5px;background:rgba(225,200,130,0.74)"></div>
<div class="a" style="left:735px;top:116px;width:5px;height:5px;background:rgba(225,200,130,0.06)"></div>
<div class="a" style="left:740px;top:116px;width:5px;height:5px;background:rgba(225,200,130,0.22)"></div>
<div class="a" style="left:745px;top:116px;width:5px;height:5px;background:rgba(225,200,130,0.11)"></div>
<div class="a" style="left:690px;top:121px;width:5px;height:5px;background:rgba(225,200,130,0.08)"></div>
<div class="a" style="left:695px;top:121px;width:5px;height:5px;background:rgba(225,200,130,0.07)"></div>
<div class="a" style="left:700px;top:121px;width:5px;height:5px;background:rgba(225,200,130,0.40)"></div>
<div class="a" style="left:705px;top:121px;width:5px;height:5px;background:rgba(225,200,130,0.66)"></div>
<div class="a" style="left:710px;top:121px;width:5px;height:5px;background:rgba(225,200,130,0.34)"></div>
<div class="a" style="left:715px;top:121px;width:5px;height:5px;background:rgba(225,200,130,0.54)"></div>
<div class="a" style="left:720px;top:121px;width:5px;height:5px;background:rgba(225,200,130,0.57)"></div>
<div class="a" style="left:725px;top:121px;width:5px;height:5px;background:rgba(225,200,130,0.44)"></div>
<div class="a" style="left:730px;top:121px;width:5px;height:5px;background:rgba(225,200,130,0.52)"></div>
<div class="a" style="left:735px;top:121px;width:5px;height:5px;background:rgba(225,200,130,0.06)"></div>
<div class="a" style="left:740px;top:121px;width:5px;height:5px;background:rgba(225,200,130,0.06)"></div>
<div class="a" style="left:745px;top:121px;width:5px;height:5px;background:rgba(225,200,130,0.09)"></div>
<div class="a" style="left:690px;top:126px;width:5px;height:4px;background:rgba(225,200,130,0.19)"></div>
<div class="a" style="left:695px;top:126px;width:5px;height:4px;background:rgba(225,200,130,0.14)"></div>
<div class="a" style="left:700px;top:126px;width:5px;height:4px;background:rgba(225,200,130,0.11)"></div>
<div class="a" style="left:705px;top:126px;width:5px;height:4px;background:rgba(225,200,130,0.17)"></div>
<div class="a" style="left:710px;top:126px;width:5px;height:4px;background:rgba(225,200,130,0.14)"></div>
<div class="a" style="left:715px;top:126px;width:5px;height:4px;background:rgba(225,200,130,0.11)"></div>
<div class="a" style="left:720px;top:126px;width:5px;height:4px;background:rgba(225,200,130,0.21)"></div>
<div class="a" style="left:725px;top:126px;width:5px;height:4px;background:rgba(225,200,130,0.19)"></div>
<div class="a" style="left:730px;top:126px;width:5px;height:4px;background:rgba(225,200,130,0.10)"></div>
<div class="a" style="left:735px;top:126px;width:5px;height:4px;background:rgba(225,200,130,0.16)"></div>
<div class="a" style="left:740px;top:126px;width:5px;height:4px;background:rgba(225,200,130,0.16)"></div>
<div class="a" style="left:745px;top:126px;width:5px;height:4px;background:rgba(225,200,130,0.23)"></div>
<div class="a" style="left:690px;top:130px;width:5px;height:5px;background:rgb(203, 215, 230)"></div>
<div class="a" style="left:695px;top:130px;width:5px;height:5px;background:rgb(211, 224, 238)"></div>
<div class="a" style="left:700px;top:130px;width:5px;height:5px;background:rgb(198, 211, 226)"></div>
<div class="a" style="left:705px;top:130px;width:5px;height:5px;background:rgb(214, 227, 241)"></div>
<div class="a" style="left:710px;top:130px;width:5px;height:5px;background:rgb(208, 221, 236)"></div>
<div class="a" style="left:715px;top:130px;width:5px;height:5px;background:rgb(202, 215, 230)"></div>
<div class="a" style="left:720px;top:130px;width:5px;height:5px;background:rgb(213, 226, 240)"></div>
<div class="a" style="left:725px;top:130px;width:5px;height:5px;background:rgb(207, 220, 234)"></div>
<div class="a" style="left:730px;top:130px;width:5px;height:5px;background:rgb(215, 228, 242)"></div>
<div class="a" style="left:735px;top:130px;width:5px;height:5px;background:rgb(204, 217, 231)"></div>
<div class="a" style="left:740px;top:130px;width:5px;height:5px;background:rgb(202, 215, 229)"></div>
<div class="a" style="left:745px;top:130px;width:5px;height:5px;background:rgb(206, 218, 233)"></div>
<div class="a" style="left:690px;top:135px;width:5px;height:5px;background:rgb(200, 213, 228)"></div>
<div class="a" style="left:695px;top:135px;width:5px;height:5px;background:rgb(210, 223, 237)"></div>
<div class="a" style="left:700px;top:135px;width:5px;height:5px;background:rgb(143, 155, 172)"></div>
<div class="a" style="left:705px;top:135px;width:5px;height:5px;background:rgb(150, 162, 178)"></div>
<div class="a" style="left:710px;top:135px;width:5px;height:5px;background:rgb(151, 163, 179)"></div>
<div class="a" style="left:715px;top:135px;width:5px;height:5px;background:rgb(159, 171, 188)"></div>
<div class="a" style="left:720px;top:135px;width:5px;height:5px;background:rgb(133, 144, 162)"></div>
<div class="a" style="left:725px;top:135px;width:5px;height:5px;background:rgb(126, 137, 155)"></div>
<div class="a" style="left:730px;top:135px;width:5px;height:5px;background:rgb(158, 170, 186)"></div>
<div class="a" style="left:735px;top:135px;width:5px;height:5px;background:rgb(204, 217, 231)"></div>
<div class="a" style="left:740px;top:135px;width:5px;height:5px;background:rgb(215, 228, 242)"></div>
<div class="a" style="left:745px;top:135px;width:5px;height:5px;background:rgb(203, 216, 231)"></div>
<div class="a" style="left:690px;top:140px;width:5px;height:5px;background:rgb(204, 217, 232)"></div>
<div class="a" style="left:695px;top:140px;width:5px;height:5px;background:rgb(198, 211, 225)"></div>
<div class="a" style="left:700px;top:140px;width:5px;height:5px;background:rgb(134, 146, 163)"></div>
<div class="a" style="left:705px;top:140px;width:5px;height:5px;background:rgb(171, 183, 199)"></div>
<div class="a" style="left:710px;top:140px;width:5px;height:5px;background:rgb(164, 176, 192)"></div>
<div class="a" style="left:715px;top:140px;width:5px;height:5px;background:rgb(145, 156, 173)"></div>
<div class="a" style="left:720px;top:140px;width:5px;height:5px;background:rgb(189, 201, 216)"></div>
<div class="a" style="left:725px;top:140px;width:5px;height:5px;background:rgb(159, 171, 187)"></div>
<div class="a" style="left:730px;top:140px;width:5px;height:5px;background:rgb(179, 191, 207)"></div>
<div class="a" style="left:735px;top:140px;width:5px;height:5px;background:rgb(214, 227, 241)"></div>
<div class="a" style="left:740px;top:140px;width:5px;height:5px;background:rgb(215, 228, 242)"></div>
<div class="a" style="left:745px;top:140px;width:5px;height:5px;background:rgb(202, 215, 229)"></div>
<div class="a" style="left:690px;top:145px;width:5px;height:5px;background:rgb(214, 226, 241)"></div>
<div class="a" style="left:695px;top:145px;width:5px;height:5px;background:rgb(211, 224, 239)"></div>
<div class="a" style="left:700px;top:145px;width:5px;height:5px;background:rgb(209, 222, 236)"></div>
<div class="a" style="left:705px;top:145px;width:5px;height:5px;background:rgb(200, 213, 228)"></div>
<div class="a" style="left:710px;top:145px;width:5px;height:5px;background:rgb(215, 227, 242)"></div>
<div class="a" style="left:715px;top:145px;width:5px;height:5px;background:rgb(208, 221, 235)"></div>
<div class="a" style="left:720px;top:145px;width:5px;height:5px;background:rgb(206, 219, 233)"></div>
<div class="a" style="left:725px;top:145px;width:5px;height:5px;background:rgb(200, 213, 227)"></div>
<div class="a" style="left:730px;top:145px;width:5px;height:5px;background:rgb(201, 214, 229)"></div>
<div class="a" style="left:735px;top:145px;width:5px;height:5px;background:rgb(200, 213, 228)"></div>
<div class="a" style="left:740px;top:145px;width:5px;height:5px;background:rgb(211, 224, 238)"></div>
<div class="a" style="left:745px;top:145px;width:5px;height:5px;background:rgb(208, 221, 236)"></div>
<div class="a" style="left:690px;top:150px;width:5px;height:5px;background:rgb(241, 242, 243)"></div>
<div class="a" style="left:695px;top:150px;width:5px;height:5px;background:rgb(229, 231, 233)"></div>
<div class="a" style="left:700px;top:150px;width:5px;height:5px;background:rgb(138, 144, 157)"></div>
<div class="a" style="left:705px;top:150px;width:5px;height:5px;background:rgb(205, 208, 213)"></div>
<div class="a" style="left:710px;top:150px;width:5px;height:5px;background:rgb(203, 206, 211)"></div>
<div class="a" style="left:715px;top:150px;width:5px;height:5px;background:rgb(198, 201, 207)"></div>
<div class="a" style="left:720px;top:150px;width:5px;height:5px;background:rgb(198, 201, 207)"></div>
<div class="a" style="left:725px;top:150px;width:5px;height:5px;background:rgb(177, 181, 190)"></div>
<div class="a" style="left:730px;top:150px;width:5px;height:5px;background:rgb(168, 173, 182)"></div>
<div class="a" style="left:735px;top:150px;width:5px;height:5px;background:rgb(243, 244, 245)"></div>
<div class="a" style="left:740px;top:150px;width:5px;height:5px;background:rgb(249, 249, 250)"></div>
<div class="a" style="left:745px;top:150px;width:5px;height:5px;background:rgb(240, 240, 242)"></div>
<div class="a" style="left:690px;top:155px;width:5px;height:5px;background:rgb(241, 241, 243)"></div>
<div class="a" style="left:695px;top:155px;width:5px;height:5px;background:rgb(236, 237, 239)"></div>
<div class="a" style="left:700px;top:155px;width:5px;height:5px;background:rgb(138, 144, 157)"></div>
<div class="a" style="left:705px;top:155px;width:5px;height:5px;background:rgb(160, 165, 175)"></div>
<div class="a" style="left:710px;top:155px;width:5px;height:5px;background:rgb(175, 179, 188)"></div>
<div class="a" style="left:715px;top:155px;width:5px;height:5px;background:rgb(166, 171, 180)"></div>
<div class="a" style="left:720px;top:155px;width:5px;height:5px;background:rgb(161, 166, 176)"></div>
<div class="a" style="left:725px;top:155px;width:5px;height:5px;background:rgb(213, 215, 220)"></div>
<div class="a" style="left:730px;top:155px;width:5px;height:5px;background:rgb(143, 149, 161)"></div>
<div class="a" style="left:735px;top:155px;width:5px;height:5px;background:rgb(232, 233, 235)"></div>
<div class="a" style="left:740px;top:155px;width:5px;height:5px;background:rgb(230, 231, 234)"></div>
<div class="a" style="left:745px;top:155px;width:5px;height:5px;background:rgb(231, 232, 235)"></div>
<div class="a" style="left:690px;top:160px;width:5px;height:5px;background:rgb(240, 241, 243)"></div>
<div class="a" style="left:695px;top:160px;width:5px;height:5px;background:rgb(240, 241, 242)"></div>
<div class="a" style="left:700px;top:160px;width:5px;height:5px;background:rgb(209, 211, 216)"></div>
<div class="a" style="left:705px;top:160px;width:5px;height:5px;background:rgb(165, 170, 179)"></div>
<div class="a" style="left:710px;top:160px;width:5px;height:5px;background:rgb(212, 215, 219)"></div>
<div class="a" style="left:715px;top:160px;width:5px;height:5px;background:rgb(212, 214, 219)"></div>
<div class="a" style="left:720px;top:160px;width:5px;height:5px;background:rgb(200, 203, 209)"></div>
<div class="a" style="left:725px;top:160px;width:5px;height:5px;background:rgb(204, 207, 212)"></div>
<div class="a" style="left:730px;top:160px;width:5px;height:5px;background:rgb(189, 193, 200)"></div>
<div class="a" style="left:735px;top:160px;width:5px;height:5px;background:rgb(248, 248, 249)"></div>
<div class="a" style="left:740px;top:160px;width:5px;height:5px;background:rgb(249, 249, 250)"></div>
<div class="a" style="left:745px;top:160px;width:5px;height:5px;background:rgb(246, 246, 247)"></div>
<div class="a" style="left:690px;top:165px;width:5px;height:5px;background:rgb(247, 247, 248)"></div>
<div class="a" style="left:695px;top:165px;width:5px;height:5px;background:rgb(241, 242, 243)"></div>
<div class="a" style="left:700px;top:165px;width:5px;height:5px;background:rgb(248, 249, 249)"></div>
<div class="a" style="left:705px;top:165px;width:5px;height:5px;background:rgb(230, 231, 234)"></div>
<div class="a" style="left:710px;top:165px;width:5px;height:5px;background:rgb(235, 236, 238)"></div>
<div class="a" style="left:715px;top:165px;width:5px;height:5px;background:rgb(246, 246, 247)"></div>
<div class="a" style="left:720px;top:165px;width:5px;height:5px;background:rgb(243, 244, 245)"></div>
<div class="a" style="left:725px;top:165px;width:5px;height:5px;background:rgb(241, 242, 243)"></div>
<div class="a" style="left:730px;top:165px;width:5px;height:5px;background:rgb(241, 242, 243)"></div>
<div class="a" style="left:735px;top:165px;width:5px;height:5px;background:rgb(246, 247, 248)"></div>
<div class="a" style="left:740px;top:165px;width:5px;height:5px;background:rgb(230, 231, 234)"></div>
<div class="a" style="left:745px;top:165px;width:5px;height:5px;background:rgb(227, 228, 231)"></div>
<div class="a" style="left:690px;top:170px;width:5px;height:5px;background:rgb(208, 220, 235)"></div>
<div class="a" style="left:695px;top:170px;width:5px;height:5px;background:rgb(207, 220, 234)"></div>
<div class="a" style="left:700px;top:170px;width:5px;height:5px;background:rgb(184, 197, 212)"></div>
<div class="a" style="left:705px;top:170px;width:5px;height:5px;background:rgb(183, 196, 211)"></div>
<div class="a" style="left:710px;top:170px;width:5px;height:5px;background:rgb(167, 179, 195)"></div>
<div class="a" style="left:715px;top:170px;width:5px;height:5px;background:rgb(172, 184, 200)"></div>
<div class="a" style="left:720px;top:170px;width:5px;height:5px;background:rgb(134, 145, 163)"></div>
<div class="a" style="left:725px;top:170px;width:5px;height:5px;background:rgb(179, 192, 207)"></div>
<div class="a" style="left:730px;top:170px;width:5px;height:5px;background:rgb(189, 201, 216)"></div>
<div class="a" style="left:735px;top:170px;width:5px;height:5px;background:rgb(199, 211, 226)"></div>
<div class="a" style="left:740px;top:170px;width:5px;height:5px;background:rgb(206, 219, 234)"></div>
<div class="a" style="left:745px;top:170px;width:5px;height:5px;background:rgb(213, 226, 240)"></div>
<div class="a" style="left:690px;top:175px;width:5px;height:5px;background:rgb(206, 219, 233)"></div>
<div class="a" style="left:695px;top:175px;width:5px;height:5px;background:rgb(215, 228, 243)"></div>
<div class="a" style="left:700px;top:175px;width:5px;height:5px;background:rgb(154, 166, 183)"></div>
<div class="a" style="left:705px;top:175px;width:5px;height:5px;background:rgb(124, 135, 153)"></div>
<div class="a" style="left:710px;top:175px;width:5px;height:5px;background:rgb(132, 143, 160)"></div>
<div class="a" style="left:715px;top:175px;width:5px;height:5px;background:rgb(143, 154, 172)"></div>
<div class="a" style="left:720px;top:175px;width:5px;height:5px;background:rgb(173, 185, 201)"></div>
<div class="a" style="left:725px;top:175px;width:5px;height:5px;background:rgb(165, 177, 193)"></div>
<div class="a" style="left:730px;top:175px;width:5px;height:5px;background:rgb(179, 191, 207)"></div>
<div class="a" style="left:735px;top:175px;width:5px;height:5px;background:rgb(202, 215, 229)"></div>
<div class="a" style="left:740px;top:175px;width:5px;height:5px;background:rgb(206, 219, 234)"></div>
<div class="a" style="left:745px;top:175px;width:5px;height:5px;background:rgb(202, 214, 229)"></div>
<div class="a" style="left:690px;top:180px;width:5px;height:5px;background:rgb(210, 223, 237)"></div>
<div class="a" style="left:695px;top:180px;width:5px;height:5px;background:rgb(212, 225, 239)"></div>
<div class="a" style="left:700px;top:180px;width:5px;height:5px;background:rgb(135, 146, 164)"></div>
<div class="a" style="left:705px;top:180px;width:5px;height:5px;background:rgb(123, 134, 152)"></div>
<div class="a" style="left:710px;top:180px;width:5px;height:5px;background:rgb(132, 144, 161)"></div>
<div class="a" style="left:715px;top:180px;width:5px;height:5px;background:rgb(136, 147, 164)"></div>
<div class="a" style="left:720px;top:180px;width:5px;height:5px;background:rgb(135, 146, 163)"></div>
<div class="a" style="left:725px;top:180px;width:5px;height:5px;background:rgb(140, 151, 169)"></div>
<div class="a" style="left:730px;top:180px;width:5px;height:5px;background:rgb(175, 187, 203)"></div>
<div class="a" style="left:735px;top:180px;width:5px;height:5px;background:rgb(207, 219, 234)"></div>
<div class="a" style="left:740px;top:180px;width:5px;height:5px;background:rgb(210, 222, 237)"></div>
<div class="a" style="left:745px;top:180px;width:5px;height:5px;background:rgb(215, 228, 243)"></div>
<div class="a" style="left:825px;top:111px;width:5px;height:5px;background:rgba(225,200,130,0.06)"></div>
<div class="a" style="left:830px;top:111px;width:5px;height:5px;background:rgba(225,200,130,0.11)"></div>
<div class="a" style="left:835px;top:111px;width:5px;height:5px;background:rgba(225,200,130,0.10)"></div>
<div class="a" style="left:840px;top:111px;width:5px;height:5px;background:rgba(225,200,130,0.19)"></div>
<div class="a" style="left:845px;top:111px;width:5px;height:5px;background:rgba(225,200,130,0.24)"></div>
<div class="a" style="left:850px;top:111px;width:5px;height:5px;background:rgba(225,200,130,0.14)"></div>
<div class="a" style="left:855px;top:111px;width:5px;height:5px;background:rgba(225,200,130,0.24)"></div>
<div class="a" style="left:860px;top:111px;width:5px;height:5px;background:rgba(225,200,130,0.25)"></div>
<div class="a" style="left:865px;top:111px;width:5px;height:5px;background:rgba(225,200,130,0.24)"></div>
<div class="a" style="left:870px;top:111px;width:5px;height:5px;background:rgba(225,200,130,0.12)"></div>
<div class="a" style="left:875px;top:111px;width:5px;height:5px;background:rgba(225,200,130,0.09)"></div>
<div class="a" style="left:880px;top:111px;width:5px;height:5px;background:rgba(225,200,130,0.10)"></div>
<div class="a" style="left:885px;top:111px;width:5px;height:5px;background:rgba(225,200,130,0.09)"></div>
<div class="a" style="left:890px;top:111px;width:5px;height:5px;background:rgba(225,200,130,0.09)"></div>
<div class="a" style="left:895px;top:111px;width:5px;height:5px;background:rgba(225,200,130,0.17)"></div>
<div class="a" style="left:900px;top:111px;width:5px;height:5px;background:rgba(225,200,130,0.23)"></div>
<div class="a" style="left:905px;top:111px;width:5px;height:5px;background:rgba(225,200,130,0.22)"></div>
<div class="a" style="left:825px;top:116px;width:5px;height:5px;background:rgba(225,200,130,0.15)"></div>
<div class="a" style="left:830px;top:116px;width:5px;height:5px;background:rgba(225,200,130,0.58)"></div>
<div class="a" style="left:835px;top:116px;width:5px;height:5px;background:rgba(225,200,130,0.65)"></div>
<div class="a" style="left:840px;top:116px;width:5px;height:5px;background:rgba(225,200,130,0.29)"></div>
<div class="a" style="left:845px;top:116px;width:5px;height:5px;background:rgba(225,200,130,0.18)"></div>
<div class="a" style="left:850px;top:116px;width:5px;height:5px;background:rgba(225,200,130,0.70)"></div>
<div class="a" style="left:855px;top:116px;width:5px;height:5px;background:rgba(225,200,130,0.64)"></div>
<div class="a" style="left:860px;top:116px;width:5px;height:5px;background:rgba(225,200,130,0.63)"></div>
<div class="a" style="left:865px;top:116px;width:5px;height:5px;background:rgba(225,200,130,0.49)"></div>
<div class="a" style="left:870px;top:116px;width:5px;height:5px;background:rgba(225,200,130,0.09)"></div>
<div class="a" style="left:875px;top:116px;width:5px;height:5px;background:rgba(225,200,130,0.64)"></div>
<div class="a" style="left:880px;top:116px;width:5px;height:5px;background:rgba(225,200,130,0.42)"></div>
<div class="a" style="left:885px;top:116px;width:5px;height:5px;background:rgba(225,200,130,0.65)"></div>
<div class="a" style="left:890px;top:116px;width:5px;height:5px;background:rgba(225,200,130,0.74)"></div>
<div class="a" style="left:895px;top:116px;width:5px;height:5px;background:rgba(225,200,130,0.13)"></div>
<div class="a" style="left:900px;top:116px;width:5px;height:5px;background:rgba(225,200,130,0.45)"></div>
<div class="a" style="left:905px;top:116px;width:5px;height:5px;background:rgba(225,200,130,0.72)"></div>
<div class="a" style="left:825px;top:121px;width:5px;height:5px;background:rgba(225,200,130,0.19)"></div>
<div class="a" style="left:830px;top:121px;width:5px;height:5px;background:rgba(225,200,130,0.34)"></div>
<div class="a" style="left:835px;top:121px;width:5px;height:5px;background:rgba(225,200,130,0.31)"></div>
<div class="a" style="left:840px;top:121px;width:5px;height:5px;background:rgba(225,200,130,0.33)"></div>
<div class="a" style="left:845px;top:121px;width:5px;height:5px;background:rgba(225,200,130,0.23)"></div>
<div class="a" style="left:850px;top:121px;width:5px;height:5px;background:rgba(225,200,130,0.65)"></div>
<div class="a" style="left:855px;top:121px;width:5px;height:5px;background:rgba(225,200,130,0.32)"></div>
<div class="a" style="left:860px;top:121px;width:5px;height:5px;background:rgba(225,200,130,0.66)"></div>
<div class="a" style="left:865px;top:121px;width:5px;height:5px;background:rgba(225,200,130,0.74)"></div>
<div class="a" style="left:870px;top:121px;width:5px;height:5px;background:rgba(225,200,130,0.18)"></div>
<div class="a" style="left:875px;top:121px;width:5px;height:5px;background:rgba(225,200,130,0.43)"></div>
<div class="a" style="left:880px;top:121px;width:5px;height:5px;background:rgba(225,200,130,0.52)"></div>
<div class="a" style="left:885px;top:121px;width:5px;height:5px;background:rgba(225,200,130,0.32)"></div>
<div class="a" style="left:890px;top:121px;width:5px;height:5px;background:rgba(225,200,130,0.26)"></div>
<div class="a" style="left:895px;top:121px;width:5px;height:5px;background:rgba(225,200,130,0.24)"></div>
<div class="a" style="left:900px;top:121px;width:5px;height:5px;background:rgba(225,200,130,0.57)"></div>
<div class="a" style="left:905px;top:121px;width:5px;height:5px;background:rgba(225,200,130,0.51)"></div>
<div class="a" style="left:825px;top:126px;width:5px;height:4px;background:rgba(225,200,130,0.24)"></div>
<div class="a" style="left:830px;top:126px;width:5px;height:4px;background:rgba(225,200,130,0.14)"></div>
<div class="a" style="left:835px;top:126px;width:5px;height:4px;background:rgba(225,200,130,0.22)"></div>
<div class="a" style="left:840px;top:126px;width:5px;height:4px;background:rgba(225,200,130,0.22)"></div>
<div class="a" style="left:845px;top:126px;width:5px;height:4px;background:rgba(225,200,130,0.09)"></div>
<div class="a" style="left:850px;top:126px;width:5px;height:4px;background:rgba(225,200,130,0.10)"></div>
<div class="a" style="left:855px;top:126px;width:5px;height:4px;background:rgba(225,200,130,0.11)"></div>
<div class="a" style="left:860px;top:126px;width:5px;height:4px;background:rgba(225,200,130,0.10)"></div>
<div class="a" style="left:865px;top:126px;width:5px;height:4px;background:rgba(225,200,130,0.17)"></div>
<div class="a" style="left:870px;top:126px;width:5px;height:4px;background:rgba(225,200,130,0.10)"></div>
<div class="a" style="left:875px;top:126px;width:5px;height:4px;background:rgba(225,200,130,0.13)"></div>
<div class="a" style="left:880px;top:126px;width:5px;height:4px;background:rgba(225,200,130,0.08)"></div>
<div class="a" style="left:885px;top:126px;width:5px;height:4px;background:rgba(225,200,130,0.23)"></div>
<div class="a" style="left:890px;top:126px;width:5px;height:4px;background:rgba(225,200,130,0.12)"></div>
<div class="a" style="left:895px;top:126px;width:5px;height:4px;background:rgba(225,200,130,0.14)"></div>
<div class="a" style="left:900px;top:126px;width:5px;height:4px;background:rgba(225,200,130,0.17)"></div>
<div class="a" style="left:905px;top:126px;width:5px;height:4px;background:rgba(225,200,130,0.23)"></div>
<div class="a" style="left:825px;top:130px;width:5px;height:5px;background:rgb(208, 221, 236)"></div>
<div class="a" style="left:830px;top:130px;width:5px;height:5px;background:rgb(199, 212, 227)"></div>
<div class="a" style="left:835px;top:130px;width:5px;height:5px;background:rgb(207, 220, 234)"></div>
<div class="a" style="left:840px;top:130px;width:5px;height:5px;background:rgb(206, 219, 234)"></div>
<div class="a" style="left:845px;top:130px;width:5px;height:5px;background:rgb(206, 219, 234)"></div>
<div class="a" style="left:850px;top:130px;width:5px;height:5px;background:rgb(216, 229, 243)"></div>
<div class="a" style="left:855px;top:130px;width:5px;height:5px;background:rgb(208, 221, 235)"></div>
<div class="a" style="left:860px;top:130px;width:5px;height:5px;background:rgb(213, 225, 240)"></div>
<div class="a" style="left:865px;top:130px;width:5px;height:5px;background:rgb(216, 229, 243)"></div>
<div class="a" style="left:870px;top:130px;width:5px;height:5px;background:rgb(201, 214, 229)"></div>
<div class="a" style="left:875px;top:130px;width:5px;height:5px;background:rgb(213, 226, 240)"></div>
<div class="a" style="left:880px;top:130px;width:5px;height:5px;background:rgb(207, 220, 235)"></div>
<div class="a" style="left:885px;top:130px;width:5px;height:5px;background:rgb(203, 215, 230)"></div>
<div class="a" style="left:890px;top:130px;width:5px;height:5px;background:rgb(206, 219, 233)"></div>
<div class="a" style="left:895px;top:130px;width:5px;height:5px;background:rgb(210, 223, 237)"></div>
<div class="a" style="left:900px;top:130px;width:5px;height:5px;background:rgb(207, 219, 234)"></div>
<div class="a" style="left:905px;top:130px;width:5px;height:5px;background:rgb(206, 219, 233)"></div>
<div class="a" style="left:825px;top:135px;width:5px;height:5px;background:rgb(202, 214, 229)"></div>
<div class="a" style="left:830px;top:135px;width:5px;height:5px;background:rgb(183, 195, 211)"></div>
<div class="a" style="left:835px;top:135px;width:5px;height:5px;background:rgb(152, 164, 181)"></div>
<div class="a" style="left:840px;top:135px;width:5px;height:5px;background:rgb(173, 185, 201)"></div>
<div class="a" style="left:845px;top:135px;width:5px;height:5px;background:rgb(211, 224, 238)"></div>
<div class="a" style="left:850px;top:135px;width:5px;height:5px;background:rgb(138, 149, 166)"></div>
<div class="a" style="left:855px;top:135px;width:5px;height:5px;background:rgb(156, 168, 184)"></div>
<div class="a" style="left:860px;top:135px;width:5px;height:5px;background:rgb(152, 164, 180)"></div>
<div class="a" style="left:865px;top:135px;width:5px;height:5px;background:rgb(139, 150, 167)"></div>
<div class="a" style="left:870px;top:135px;width:5px;height:5px;background:rgb(199, 212, 227)"></div>
<div class="a" style="left:875px;top:135px;width:5px;height:5px;background:rgb(160, 172, 188)"></div>
<div class="a" style="left:880px;top:135px;width:5px;height:5px;background:rgb(149, 160, 177)"></div>
<div class="a" style="left:885px;top:135px;width:5px;height:5px;background:rgb(156, 168, 184)"></div>
<div class="a" style="left:890px;top:135px;width:5px;height:5px;background:rgb(155, 167, 184)"></div>
<div class="a" style="left:895px;top:135px;width:5px;height:5px;background:rgb(203, 216, 231)"></div>
<div class="a" style="left:900px;top:135px;width:5px;height:5px;background:rgb(160, 171, 188)"></div>
<div class="a" style="left:905px;top:135px;width:5px;height:5px;background:rgb(154, 166, 182)"></div>
<div class="a" style="left:825px;top:140px;width:5px;height:5px;background:rgb(207, 220, 235)"></div>
<div class="a" style="left:830px;top:140px;width:5px;height:5px;background:rgb(126, 137, 155)"></div>
<div class="a" style="left:835px;top:140px;width:5px;height:5px;background:rgb(143, 154, 171)"></div>
<div class="a" style="left:840px;top:140px;width:5px;height:5px;background:rgb(131, 142, 160)"></div>
<div class="a" style="left:845px;top:140px;width:5px;height:5px;background:rgb(199, 211, 226)"></div>
<div class="a" style="left:850px;top:140px;width:5px;height:5px;background:rgb(173, 185, 201)"></div>
<div class="a" style="left:855px;top:140px;width:5px;height:5px;background:rgb(152, 164, 181)"></div>
<div class="a" style="left:860px;top:140px;width:5px;height:5px;background:rgb(126, 137, 155)"></div>
<div class="a" style="left:865px;top:140px;width:5px;height:5px;background:rgb(133, 144, 162)"></div>
<div class="a" style="left:870px;top:140px;width:5px;height:5px;background:rgb(213, 226, 241)"></div>
<div class="a" style="left:875px;top:140px;width:5px;height:5px;background:rgb(182, 194, 210)"></div>
<div class="a" style="left:880px;top:140px;width:5px;height:5px;background:rgb(160, 172, 188)"></div>
<div class="a" style="left:885px;top:140px;width:5px;height:5px;background:rgb(185, 198, 213)"></div>
<div class="a" style="left:890px;top:140px;width:5px;height:5px;background:rgb(174, 186, 202)"></div>
<div class="a" style="left:895px;top:140px;width:5px;height:5px;background:rgb(215, 228, 242)"></div>
<div class="a" style="left:900px;top:140px;width:5px;height:5px;background:rgb(145, 156, 173)"></div>
<div class="a" style="left:905px;top:140px;width:5px;height:5px;background:rgb(137, 148, 166)"></div>
<div class="a" style="left:825px;top:145px;width:5px;height:5px;background:rgb(200, 212, 227)"></div>
<div class="a" style="left:830px;top:145px;width:5px;height:5px;background:rgb(213, 226, 240)"></div>
<div class="a" style="left:835px;top:145px;width:5px;height:5px;background:rgb(203, 216, 230)"></div>
<div class="a" style="left:840px;top:145px;width:5px;height:5px;background:rgb(204, 217, 231)"></div>
<div class="a" style="left:845px;top:145px;width:5px;height:5px;background:rgb(213, 226, 241)"></div>
<div class="a" style="left:850px;top:145px;width:5px;height:5px;background:rgb(200, 213, 227)"></div>
<div class="a" style="left:855px;top:145px;width:5px;height:5px;background:rgb(198, 211, 226)"></div>
<div class="a" style="left:860px;top:145px;width:5px;height:5px;background:rgb(212, 225, 239)"></div>
<div class="a" style="left:865px;top:145px;width:5px;height:5px;background:rgb(199, 211, 226)"></div>
<div class="a" style="left:870px;top:145px;width:5px;height:5px;background:rgb(209, 222, 236)"></div>
<div class="a" style="left:875px;top:145px;width:5px;height:5px;background:rgb(207, 220, 234)"></div>
<div class="a" style="left:880px;top:145px;width:5px;height:5px;background:rgb(198, 211, 225)"></div>
<div class="a" style="left:885px;top:145px;width:5px;height:5px;background:rgb(201, 213, 228)"></div>
<div class="a" style="left:890px;top:145px;width:5px;height:5px;background:rgb(213, 226, 240)"></div>
<div class="a" style="left:895px;top:145px;width:5px;height:5px;background:rgb(208, 221, 235)"></div>
<div class="a" style="left:900px;top:145px;width:5px;height:5px;background:rgb(207, 219, 234)"></div>
<div class="a" style="left:905px;top:145px;width:5px;height:5px;background:rgb(210, 223, 237)"></div>
<div class="a" style="left:825px;top:150px;width:5px;height:5px;background:rgb(245, 245, 246)"></div>
<div class="a" style="left:830px;top:150px;width:5px;height:5px;background:rgb(191, 194, 201)"></div>
<div class="a" style="left:835px;top:150px;width:5px;height:5px;background:rgb(157, 163, 173)"></div>
<div class="a" style="left:840px;top:150px;width:5px;height:5px;background:rgb(216, 218, 222)"></div>
<div class="a" style="left:845px;top:150px;width:5px;height:5px;background:rgb(237, 238, 240)"></div>
<div class="a" style="left:850px;top:150px;width:5px;height:5px;background:rgb(181, 185, 193)"></div>
<div class="a" style="left:855px;top:150px;width:5px;height:5px;background:rgb(216, 218, 222)"></div>
<div class="a" style="left:860px;top:150px;width:5px;height:5px;background:rgb(190, 193, 200)"></div>
<div class="a" style="left:865px;top:150px;width:5px;height:5px;background:rgb(166, 170, 180)"></div>
<div class="a" style="left:870px;top:150px;width:5px;height:5px;background:rgb(238, 238, 240)"></div>
<div class="a" style="left:875px;top:150px;width:5px;height:5px;background:rgb(212, 214, 219)"></div>
<div class="a" style="left:880px;top:150px;width:5px;height:5px;background:rgb(135, 142, 155)"></div>
<div class="a" style="left:885px;top:150px;width:5px;height:5px;background:rgb(152, 157, 169)"></div>
<div class="a" style="left:890px;top:150px;width:5px;height:5px;background:rgb(137, 143, 156)"></div>
<div class="a" style="left:895px;top:150px;width:5px;height:5px;background:rgb(247, 247, 248)"></div>
<div class="a" style="left:900px;top:150px;width:5px;height:5px;background:rgb(195, 199, 205)"></div>
<div class="a" style="left:905px;top:150px;width:5px;height:5px;background:rgb(214, 216, 221)"></div>
<div class="a" style="left:825px;top:155px;width:5px;height:5px;background:rgb(232, 233, 235)"></div>
<div class="a" style="left:830px;top:155px;width:5px;height:5px;background:rgb(195, 198, 205)"></div>
<div class="a" style="left:835px;top:155px;width:5px;height:5px;background:rgb(207, 209, 214)"></div>
<div class="a" style="left:840px;top:155px;width:5px;height:5px;background:rgb(182, 186, 194)"></div>
<div class="a" style="left:845px;top:155px;width:5px;height:5px;background:rgb(229, 230, 233)"></div>
<div class="a" style="left:850px;top:155px;width:5px;height:5px;background:rgb(149, 155, 166)"></div>
<div class="a" style="left:855px;top:155px;width:5px;height:5px;background:rgb(196, 199, 205)"></div>
<div class="a" style="left:860px;top:155px;width:5px;height:5px;background:rgb(205, 208, 213)"></div>
<div class="a" style="left:865px;top:155px;width:5px;height:5px;background:rgb(141, 147, 159)"></div>
<div class="a" style="left:870px;top:155px;width:5px;height:5px;background:rgb(236, 237, 239)"></div>
<div class="a" style="left:875px;top:155px;width:5px;height:5px;background:rgb(159, 164, 175)"></div>
<div class="a" style="left:880px;top:155px;width:5px;height:5px;background:rgb(210, 212, 217)"></div>
<div class="a" style="left:885px;top:155px;width:5px;height:5px;background:rgb(213, 215, 219)"></div>
<div class="a" style="left:890px;top:155px;width:5px;height:5px;background:rgb(160, 165, 175)"></div>
<div class="a" style="left:895px;top:155px;width:5px;height:5px;background:rgb(240, 240, 242)"></div>
<div class="a" style="left:900px;top:155px;width:5px;height:5px;background:rgb(211, 214, 218)"></div>
<div class="a" style="left:905px;top:155px;width:5px;height:5px;background:rgb(139, 146, 158)"></div>
<div class="a" style="left:825px;top:160px;width:5px;height:5px;background:rgb(235, 236, 238)"></div>
<div class="a" style="left:830px;top:160px;width:5px;height:5px;background:rgb(151, 156, 168)"></div>
<div class="a" style="left:835px;top:160px;width:5px;height:5px;background:rgb(211, 213, 218)"></div>
<div class="a" style="left:840px;top:160px;width:5px;height:5px;background:rgb(146, 152, 164)"></div>
<div class="a" style="left:845px;top:160px;width:5px;height:5px;background:rgb(247, 248, 249)"></div>
<div class="a" style="left:850px;top:160px;width:5px;height:5px;background:rgb(146, 152, 163)"></div>
<div class="a" style="left:855px;top:160px;width:5px;height:5px;background:rgb(180, 184, 192)"></div>
<div class="a" style="left:860px;top:160px;width:5px;height:5px;background:rgb(189, 193, 200)"></div>
<div class="a" style="left:865px;top:160px;width:5px;height:5px;background:rgb(171, 176, 185)"></div>
<div class="a" style="left:870px;top:160px;width:5px;height:5px;background:rgb(228, 230, 233)"></div>
<div class="a" style="left:875px;top:160px;width:5px;height:5px;background:rgb(195, 198, 205)"></div>
<div class="a" style="left:880px;top:160px;width:5px;height:5px;background:rgb(207, 209, 214)"></div>
<div class="a" style="left:885px;top:160px;width:5px;height:5px;background:rgb(174, 178, 187)"></div>
<div class="a" style="left:890px;top:160px;width:5px;height:5px;background:rgb(198, 201, 207)"></div>
<div class="a" style="left:895px;top:160px;width:5px;height:5px;background:rgb(247, 247, 248)"></div>
<div class="a" style="left:900px;top:160px;width:5px;height:5px;background:rgb(204, 207, 212)"></div>
<div class="a" style="left:905px;top:160px;width:5px;height:5px;background:rgb(213, 216, 220)"></div>
<div class="a" style="left:825px;top:165px;width:5px;height:5px;background:rgb(244, 245, 246)"></div>
<div class="a" style="left:830px;top:165px;width:5px;height:5px;background:rgb(242, 243, 244)"></div>
<div class="a" style="left:835px;top:165px;width:5px;height:5px;background:rgb(242, 243, 244)"></div>
<div class="a" style="left:840px;top:165px;width:5px;height:5px;background:rgb(232, 233, 236)"></div>
<div class="a" style="left:845px;top:165px;width:5px;height:5px;background:rgb(243, 243, 244)"></div>
<div class="a" style="left:850px;top:165px;width:5px;height:5px;background:rgb(238, 239, 241)"></div>
<div class="a" style="left:855px;top:165px;width:5px;height:5px;background:rgb(245, 246, 247)"></div>
<div class="a" style="left:860px;top:165px;width:5px;height:5px;background:rgb(241, 242, 243)"></div>
<div class="a" style="left:865px;top:165px;width:5px;height:5px;background:rgb(249, 249, 250)"></div>
<div class="a" style="left:870px;top:165px;width:5px;height:5px;background:rgb(243, 244, 245)"></div>
<div class="a" style="left:875px;top:165px;width:5px;height:5px;background:rgb(249, 249, 250)"></div>
<div class="a" style="left:880px;top:165px;width:5px;height:5px;background:rgb(233, 234, 236)"></div>
<div class="a" style="left:885px;top:165px;width:5px;height:5px;background:rgb(237, 238, 240)"></div>
<div class="a" style="left:890px;top:165px;width:5px;height:5px;background:rgb(245, 245, 246)"></div>
<div class="a" style="left:895px;top:165px;width:5px;height:5px;background:rgb(238, 239, 241)"></div>
<div class="a" style="left:900px;top:165px;width:5px;height:5px;background:rgb(228, 230, 232)"></div>
<div class="a" style="left:905px;top:165px;width:5px;height:5px;background:rgb(247, 247, 248)"></div>
<div class="a" style="left:825px;top:170px;width:5px;height:5px;background:rgb(201, 214, 229)"></div>
<div class="a" style="left:830px;top:170px;width:5px;height:5px;background:rgb(161, 173, 189)"></div>
<div class="a" style="left:835px;top:170px;width:5px;height:5px;background:rgb(157, 168, 185)"></div>
<div class="a" style="left:840px;top:170px;width:5px;height:5px;background:rgb(134, 145, 162)"></div>
<div class="a" style="left:845px;top:170px;width:5px;height:5px;background:rgb(209, 222, 236)"></div>
<div class="a" style="left:850px;top:170px;width:5px;height:5px;background:rgb(156, 168, 184)"></div>
<div class="a" style="left:855px;top:170px;width:5px;height:5px;background:rgb(144, 155, 172)"></div>
<div class="a" style="left:860px;top:170px;width:5px;height:5px;background:rgb(124, 135, 152)"></div>
<div class="a" style="left:865px;top:170px;width:5px;height:5px;background:rgb(167, 179, 195)"></div>
<div class="a" style="left:870px;top:170px;width:5px;height:5px;background:rgb(201, 213, 228)"></div>
<div class="a" style="left:875px;top:170px;width:5px;height:5px;background:rgb(142, 154, 171)"></div>
<div class="a" style="left:880px;top:170px;width:5px;height:5px;background:rgb(147, 159, 176)"></div>
<div class="a" style="left:885px;top:170px;width:5px;height:5px;background:rgb(163, 175, 191)"></div>
<div class="a" style="left:890px;top:170px;width:5px;height:5px;background:rgb(167, 179, 195)"></div>
<div class="a" style="left:895px;top:170px;width:5px;height:5px;background:rgb(215, 228, 242)"></div>
<div class="a" style="left:900px;top:170px;width:5px;height:5px;background:rgb(181, 194, 209)"></div>
<div class="a" style="left:905px;top:170px;width:5px;height:5px;background:rgb(185, 198, 213)"></div>
<div class="a" style="left:825px;top:175px;width:5px;height:5px;background:rgb(203, 215, 230)"></div>
<div class="a" style="left:830px;top:175px;width:5px;height:5px;background:rgb(173, 185, 201)"></div>
<div class="a" style="left:835px;top:175px;width:5px;height:5px;background:rgb(179, 191, 207)"></div>
<div class="a" style="left:840px;top:175px;width:5px;height:5px;background:rgb(185, 197, 212)"></div>
<div class="a" style="left:845px;top:175px;width:5px;height:5px;background:rgb(201, 213, 228)"></div>
<div class="a" style="left:850px;top:175px;width:5px;height:5px;background:rgb(131, 142, 160)"></div>
<div class="a" style="left:855px;top:175px;width:5px;height:5px;background:rgb(145, 156, 173)"></div>
<div class="a" style="left:860px;top:175px;width:5px;height:5px;background:rgb(171, 183, 199)"></div>
<div class="a" style="left:865px;top:175px;width:5px;height:5px;background:rgb(174, 186, 202)"></div>
<div class="a" style="left:870px;top:175px;width:5px;height:5px;background:rgb(211, 223, 238)"></div>
<div class="a" style="left:875px;top:175px;width:5px;height:5px;background:rgb(159, 171, 187)"></div>
<div class="a" style="left:880px;top:175px;width:5px;height:5px;background:rgb(180, 192, 207)"></div>
<div class="a" style="left:885px;top:175px;width:5px;height:5px;background:rgb(160, 172, 188)"></div>
<div class="a" style="left:890px;top:175px;width:5px;height:5px;background:rgb(172, 184, 200)"></div>
<div class="a" style="left:895px;top:175px;width:5px;height:5px;background:rgb(199, 211, 226)"></div>
<div class="a" style="left:900px;top:175px;width:5px;height:5px;background:rgb(124, 135, 153)"></div>
<div class="a" style="left:905px;top:175px;width:5px;height:5px;background:rgb(153, 165, 181)"></div>
<div class="a" style="left:825px;top:180px;width:5px;height:5px;background:rgb(212, 224, 239)"></div>
<div class="a" style="left:830px;top:180px;width:5px;height:5px;background:rgb(125, 136, 154)"></div>
<div class="a" style="left:835px;top:180px;width:5px;height:5px;background:rgb(169, 181, 197)"></div>
<div class="a" style="left:840px;top:180px;width:5px;height:5px;background:rgb(166, 178, 194)"></div>
<div class="a" style="left:845px;top:180px;width:5px;height:5px;background:rgb(216, 229, 243)"></div>
<div class="a" style="left:850px;top:180px;width:5px;height:5px;background:rgb(164, 176, 192)"></div>
<div class="a" style="left:855px;top:180px;width:5px;height:5px;background:rgb(158, 170, 186)"></div>
<div class="a" style="left:860px;top:180px;width:5px;height:5px;background:rgb(156, 168, 184)"></div>
<div class="a" style="left:865px;top:180px;width:5px;height:5px;background:rgb(177, 189, 205)"></div>
<div class="a" style="left:870px;top:180px;width:5px;height:5px;background:rgb(207, 220, 234)"></div>
<div class="a" style="left:875px;top:180px;width:5px;height:5px;background:rgb(190, 202, 218)"></div>
<div class="a" style="left:880px;top:180px;width:5px;height:5px;background:rgb(172, 184, 200)"></div>
<div class="a" style="left:885px;top:180px;width:5px;height:5px;background:rgb(184, 196, 212)"></div>
<div class="a" style="left:890px;top:180px;width:5px;height:5px;background:rgb(163, 175, 191)"></div>
<div class="a" style="left:895px;top:180px;width:5px;height:5px;background:rgb(215, 228, 242)"></div>
<div class="a" style="left:900px;top:180px;width:5px;height:5px;background:rgb(189, 201, 216)"></div>
<div class="a" style="left:905px;top:180px;width:5px;height:5px;background:rgb(170, 182, 198)"></div>
</body></html>
